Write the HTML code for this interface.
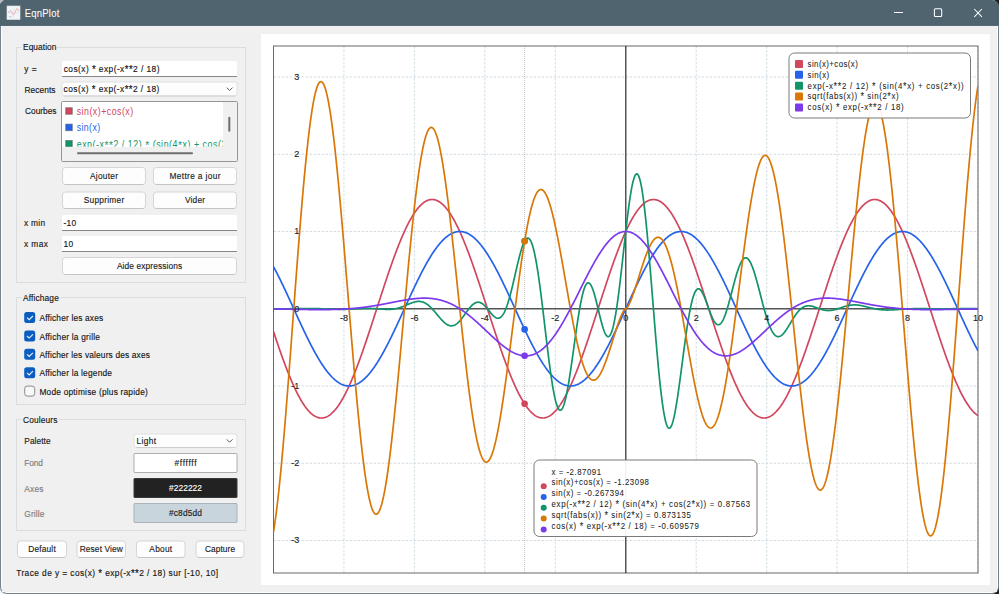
<!DOCTYPE html>
<html><head><meta charset="utf-8"><title>EqnPlot</title>
<style>html,body{margin:0;padding:0;background:#1b1b1b;overflow:hidden}svg{display:block}text{font-family:"Liberation Sans", sans-serif}</style>
</head><body>
<svg width="999" height="594" viewBox="0 0 999 594" style='font-family:"Liberation Sans", sans-serif'>
<rect x="0" y="0" width="999" height="594" fill="#1b1b1b"/>
<rect x="0" y="300" width="300" height="294" fill="#f4f4f4"/>
<rect x="0" y="0" width="20" height="20" fill="#c9cdd0"/>
<rect x="0" y="0" width="999" height="594" rx="7" fill="#72838d"/>
<rect x="1" y="0" width="997" height="593" rx="6" fill="#ffffff"/>
<rect x="2" y="26" width="995" height="566" fill="#f0f0f0"/>
<path d="M0,0 L992,0 A7,7 0 0 1 999,7 L999,26 L0,26 Z" fill="#506470"/>
<path d="M0,0 L4,0 Q2,1.5 0,4 Z" fill="#b8bcc0"/>
<rect x="0" y="25" width="999" height="1" fill="#576a76"/>
<rect x="7" y="6" width="13" height="13.5" fill="#f2f5f7" stroke="#e4e9ec" stroke-width="0.6"/>
<path d="M8.5,13 Q10,9 11.3,11.5 T13.5,15 Q15,13 16,10 T18.8,11" fill="none" stroke="#f0a0a8" stroke-width="0.9"/>
<path d="M13.2,8 L13.2,18 M8,12.8 L19,12.8" fill="none" stroke="#cfd8de" stroke-width="0.5"/>
<path d="M9.5,16 L11,17.5" fill="none" stroke="#808890" stroke-width="0.7"/>
<text transform="translate(24.80,16.80) scale(0.88,1)" x="0" y="0" font-size="10.8" fill="#ffffff" text-anchor="start" font-weight="normal" textLength="39.20" lengthAdjust="spacing" stroke="#ffffff" stroke-width="0.05">EqnPlot</text>
<rect x="894" y="12" width="9" height="1" fill="#ffffff"/>
<rect x="934.4" y="8.8" width="7.3" height="7.7" rx="1" fill="none" stroke="#ffffff" stroke-width="1.05"/>
<path d="M974.3,9 L981.9,16.8 M981.9,9 L974.3,16.8" stroke="#ffffff" stroke-width="1.05"/>
<rect x="16.5" y="47.5" width="229" height="235" rx="0" fill="none" stroke="#dcdcdc" stroke-width="1"/>
<rect x="21.5" y="42" width="35.5" height="10" fill="#f0f0f0"/>
<text transform="translate(23.00,50.00) scale(0.88,1)" x="0" y="0" font-size="9.5" fill="#141414" text-anchor="start" font-weight="normal" textLength="38.07" lengthAdjust="spacing" stroke="#141414" stroke-width="0.15">Equation</text>
<text transform="translate(24.20,72.30) scale(0.88,1)" x="0" y="0" font-size="9.5" fill="#141414" text-anchor="start" font-weight="normal" textLength="14.20" lengthAdjust="spacing" stroke="#141414" stroke-width="0.15">y =</text>
<rect x="62" y="61" width="175" height="16" rx="1.5" fill="#ffffff"/>
<rect x="62" y="76" width="175" height="1" fill="#878787"/>
<text transform="translate(63.70,72.30) scale(0.88,1)" x="0" y="0" font-size="9.5" fill="#141414" text-anchor="start" font-weight="normal" textLength="108.86" lengthAdjust="spacing" stroke="#141414" stroke-width="0.15">cos(x) <tspan font-size="10.92" baseline-shift="-1.3">*</tspan> exp(-x<tspan font-size="10.92" baseline-shift="-1.3">*</tspan><tspan font-size="10.92" baseline-shift="-1.3">*</tspan>2 / 18)</text>
<text transform="translate(24.50,92.60) scale(0.88,1)" x="0" y="0" font-size="9.5" fill="#141414" text-anchor="start" font-weight="normal" textLength="35.23" lengthAdjust="spacing" stroke="#141414" stroke-width="0.15">Recents</text>
<rect x="62.0" y="82.0" width="175.0" height="14.0" rx="2.2" fill="#fdfdfd" stroke="#e0e0e0" stroke-width="1"/>
<path d="M64.0,96.0 L235.0,96.0" stroke="#cfcfcf" stroke-width="1"/>
<path d="M226.8,87.6 L229.6,90.5 L232.5,87.6" fill="none" stroke="#5f5f5f" stroke-width="1"/>
<text transform="translate(63.60,92.40) scale(0.88,1)" x="0" y="0" font-size="9.5" fill="#141414" text-anchor="start" font-weight="normal" textLength="108.86" lengthAdjust="spacing" stroke="#141414" stroke-width="0.15">cos(x) <tspan font-size="10.92" baseline-shift="-1.3">*</tspan> exp(-x<tspan font-size="10.92" baseline-shift="-1.3">*</tspan><tspan font-size="10.92" baseline-shift="-1.3">*</tspan>2 / 18)</text>
<text transform="translate(25.00,114.30) scale(0.88,1)" x="0" y="0" font-size="9.5" fill="#141414" text-anchor="start" font-weight="normal" textLength="35.80" lengthAdjust="spacing" stroke="#141414" stroke-width="0.15">Courbes</text>
<rect x="61.5" y="101.5" width="176" height="60" rx="1" fill="#f0f0f0" stroke="#959595" stroke-width="1"/>
<rect x="62" y="102" width="161" height="45" fill="#ffffff"/>
<defs><clipPath id="lc"><rect x="62" y="102" width="161" height="44.8"/></clipPath></defs>
<g clip-path="url(#lc)">
<rect x="65.7" y="107.69999999999999" width="6.6" height="6.6" fill="#d1475e" stroke="#505050" stroke-opacity="0.55" stroke-width="0.9"/>
<text transform="translate(76.70,114.90) scale(0.88,1)" x="0" y="0" font-size="10" fill="#d1475e" text-anchor="start" font-weight="normal" textLength="64.20" lengthAdjust="spacing">sin(x)+cos(x)</text>
<rect x="65.7" y="124.1" width="6.6" height="6.6" fill="#2563eb" stroke="#505050" stroke-opacity="0.55" stroke-width="0.9"/>
<text transform="translate(76.70,131.30) scale(0.88,1)" x="0" y="0" font-size="10" fill="#2563eb" text-anchor="start" font-weight="normal" textLength="26.70" lengthAdjust="spacing">sin(x)</text>
<rect x="65.7" y="140.49999999999997" width="6.6" height="6.6" fill="#11946a" stroke="#505050" stroke-opacity="0.55" stroke-width="0.9"/>
<text transform="translate(76.70,147.70) scale(0.88,1)" x="0" y="0" font-size="10" fill="#11946a" text-anchor="start" font-weight="normal" textLength="188.64" lengthAdjust="spacing">exp(-x<tspan font-size="11.50" baseline-shift="-1.3">*</tspan><tspan font-size="11.50" baseline-shift="-1.3">*</tspan>2 / 12) <tspan font-size="11.50" baseline-shift="-1.3">*</tspan> (sin(4<tspan font-size="11.50" baseline-shift="-1.3">*</tspan>x) + cos(2<tspan font-size="11.50" baseline-shift="-1.3">*</tspan>x))</text>
</g>
<rect x="228.3" y="116.7" width="2" height="15" rx="1" fill="#6e6e6e"/>
<rect x="77" y="152.2" width="116" height="2" rx="1" fill="#6e6e6e"/>
<rect x="62.5" y="167.5" width="83" height="17" rx="3" fill="#fdfdfd" stroke="#d5d5d5" stroke-width="1"/>
<path d="M64.5,184.5 L143.5,184.5" stroke="#c4c4c4" stroke-width="1"/>
<text transform="translate(89.90,179.20) scale(0.88,1)" x="0" y="0" font-size="9.5" fill="#1a1a1a" text-anchor="start" font-weight="normal" textLength="32.05" lengthAdjust="spacing" stroke="#1a1a1a" stroke-width="0.15">Ajouter</text>
<rect x="153.5" y="167.5" width="83" height="17" rx="3" fill="#fdfdfd" stroke="#d5d5d5" stroke-width="1"/>
<path d="M155.5,184.5 L234.5,184.5" stroke="#c4c4c4" stroke-width="1"/>
<text transform="translate(169.50,179.20) scale(0.88,1)" x="0" y="0" font-size="9.5" fill="#1a1a1a" text-anchor="start" font-weight="normal" textLength="57.95" lengthAdjust="spacing" stroke="#1a1a1a" stroke-width="0.15">Mettre a jour</text>
<rect x="62.5" y="192.0" width="83" height="16.5" rx="3" fill="#fdfdfd" stroke="#d5d5d5" stroke-width="1"/>
<path d="M64.5,208.5 L143.5,208.5" stroke="#c4c4c4" stroke-width="1"/>
<text transform="translate(83.80,203.45) scale(0.88,1)" x="0" y="0" font-size="9.5" fill="#1a1a1a" text-anchor="start" font-weight="normal" textLength="45.91" lengthAdjust="spacing" stroke="#1a1a1a" stroke-width="0.15">Supprimer</text>
<rect x="153.5" y="192.0" width="83" height="16.5" rx="3" fill="#fdfdfd" stroke="#d5d5d5" stroke-width="1"/>
<path d="M155.5,208.5 L234.5,208.5" stroke="#c4c4c4" stroke-width="1"/>
<text transform="translate(185.00,203.45) scale(0.88,1)" x="0" y="0" font-size="9.5" fill="#1a1a1a" text-anchor="start" font-weight="normal" textLength="22.73" lengthAdjust="spacing" stroke="#1a1a1a" stroke-width="0.15">Vider</text>
<text transform="translate(24.00,225.80) scale(0.88,1)" x="0" y="0" font-size="9.5" fill="#141414" text-anchor="start" font-weight="normal" textLength="24.09" lengthAdjust="spacing" stroke="#141414" stroke-width="0.15">x min</text>
<rect x="62" y="215" width="175" height="16" rx="1.5" fill="#ffffff"/>
<rect x="62" y="230" width="175" height="1" fill="#878787"/>
<text transform="translate(63.60,225.80) scale(0.88,1)" x="0" y="0" font-size="9.5" fill="#141414" text-anchor="start" font-weight="normal" textLength="14.20" lengthAdjust="spacing" stroke="#141414" stroke-width="0.15">-10</text>
<text transform="translate(24.00,247.00) scale(0.88,1)" x="0" y="0" font-size="9.5" fill="#141414" text-anchor="start" font-weight="normal" textLength="27.27" lengthAdjust="spacing" stroke="#141414" stroke-width="0.15">x max</text>
<rect x="62" y="236" width="175" height="16" rx="1.5" fill="#ffffff"/>
<rect x="62" y="251" width="175" height="1" fill="#878787"/>
<text transform="translate(63.60,247.00) scale(0.88,1)" x="0" y="0" font-size="9.5" fill="#141414" text-anchor="start" font-weight="normal" textLength="10.80" lengthAdjust="spacing" stroke="#141414" stroke-width="0.15">10</text>
<rect x="62.5" y="257.5" width="174" height="17" rx="3" fill="#fdfdfd" stroke="#d5d5d5" stroke-width="1"/>
<path d="M64.5,274.5 L234.5,274.5" stroke="#c4c4c4" stroke-width="1"/>
<text transform="translate(116.90,269.20) scale(0.88,1)" x="0" y="0" font-size="9.5" fill="#1a1a1a" text-anchor="start" font-weight="normal" textLength="74.09" lengthAdjust="spacing" stroke="#1a1a1a" stroke-width="0.15">Aide expressions</text>
<rect x="16.5" y="297.5" width="229" height="107" rx="0" fill="none" stroke="#dcdcdc" stroke-width="1"/>
<rect x="21.5" y="292" width="38.5" height="10" fill="#f0f0f0"/>
<text transform="translate(23.00,301.00) scale(0.88,1)" x="0" y="0" font-size="9.5" fill="#141414" text-anchor="start" font-weight="normal" textLength="40.68" lengthAdjust="spacing" stroke="#141414" stroke-width="0.15">Affichage</text>
<rect x="24.2" y="312.0" width="11" height="11" rx="2.5" fill="#0b5ebf"/>
<path d="M27.0,317.6 L29.2,319.7 L32.9,316.0" fill="none" stroke="#eef4ff" stroke-width="1.1"/>
<text transform="translate(39.40,321.10) scale(0.88,1)" x="0" y="0" font-size="9.5" fill="#141414" text-anchor="start" font-weight="normal" textLength="72.50" lengthAdjust="spacing" stroke="#141414" stroke-width="0.15">Afficher les axes</text>
<rect x="24.2" y="330.4" width="11" height="11" rx="2.5" fill="#0b5ebf"/>
<path d="M27.0,336.0 L29.2,338.09999999999997 L32.9,334.4" fill="none" stroke="#eef4ff" stroke-width="1.1"/>
<text transform="translate(39.40,339.50) scale(0.88,1)" x="0" y="0" font-size="9.5" fill="#141414" text-anchor="start" font-weight="normal" textLength="68.86" lengthAdjust="spacing" stroke="#141414" stroke-width="0.15">Afficher la grille</text>
<rect x="24.2" y="348.8" width="11" height="11" rx="2.5" fill="#0b5ebf"/>
<path d="M27.0,354.40000000000003 L29.2,356.5 L32.9,352.8" fill="none" stroke="#eef4ff" stroke-width="1.1"/>
<text transform="translate(39.40,357.90) scale(0.88,1)" x="0" y="0" font-size="9.5" fill="#141414" text-anchor="start" font-weight="normal" textLength="125.57" lengthAdjust="spacing" stroke="#141414" stroke-width="0.15">Afficher les valeurs des axes</text>
<rect x="24.2" y="367.2" width="11" height="11" rx="2.5" fill="#0b5ebf"/>
<path d="M27.0,372.8 L29.2,374.9 L32.9,371.2" fill="none" stroke="#eef4ff" stroke-width="1.1"/>
<text transform="translate(39.40,376.30) scale(0.88,1)" x="0" y="0" font-size="9.5" fill="#141414" text-anchor="start" font-weight="normal" textLength="82.50" lengthAdjust="spacing" stroke="#141414" stroke-width="0.15">Afficher la legende</text>
<rect x="24.7" y="386.1" width="10" height="10" rx="2.5" fill="#f8f8f8" stroke="#8a8a8a" stroke-width="1"/>
<text transform="translate(39.40,394.70) scale(0.88,1)" x="0" y="0" font-size="9.5" fill="#141414" text-anchor="start" font-weight="normal" textLength="123.18" lengthAdjust="spacing" stroke="#141414" stroke-width="0.15">Mode optimise (plus rapide)</text>
<rect x="16.5" y="419.5" width="229" height="111" rx="0" fill="none" stroke="#dcdcdc" stroke-width="1"/>
<rect x="21.5" y="414" width="37.5" height="10" fill="#f0f0f0"/>
<text transform="translate(23.00,423.30) scale(0.88,1)" x="0" y="0" font-size="9.5" fill="#141414" text-anchor="start" font-weight="normal" textLength="39.09" lengthAdjust="spacing" stroke="#141414" stroke-width="0.15">Couleurs</text>
<text transform="translate(24.30,443.70) scale(0.88,1)" x="0" y="0" font-size="9.5" fill="#1a1a1a" text-anchor="start" font-weight="normal" textLength="29.89" lengthAdjust="spacing" stroke="#1a1a1a" stroke-width="0.15">Palette</text>
<rect x="134.0" y="434.0" width="103.0" height="13.5" rx="2.2" fill="#fdfdfd" stroke="#e0e0e0" stroke-width="1"/>
<path d="M136.0,447.5 L235.0,447.5" stroke="#cfcfcf" stroke-width="1"/>
<path d="M226.8,439.35 L229.6,442.25 L232.5,439.35" fill="none" stroke="#5f5f5f" stroke-width="1"/>
<text transform="translate(136.50,444.15) scale(0.88,1)" x="0" y="0" font-size="9.5" fill="#141414" text-anchor="start" font-weight="normal" textLength="22.16" lengthAdjust="spacing" stroke="#141414" stroke-width="0.15">Light</text>
<text transform="translate(24.30,466.40) scale(0.88,1)" x="0" y="0" font-size="9.5" fill="#7c7c7c" text-anchor="start" font-weight="normal" textLength="21.25" lengthAdjust="spacing" stroke="#7c7c7c" stroke-width="0.15">Fond</text>
<text transform="translate(24.30,491.70) scale(0.88,1)" x="0" y="0" font-size="9.5" fill="#7c7c7c" text-anchor="start" font-weight="normal" textLength="21.82" lengthAdjust="spacing" stroke="#7c7c7c" stroke-width="0.15">Axes</text>
<text transform="translate(24.30,516.70) scale(0.88,1)" x="0" y="0" font-size="9.5" fill="#7c7c7c" text-anchor="start" font-weight="normal" textLength="22.95" lengthAdjust="spacing" stroke="#7c7c7c" stroke-width="0.15">Grille</text>
<rect x="134.0" y="453.5" width="103.0" height="19" rx="0.5" fill="#ffffff" stroke="#adadad" stroke-width="1"/>
<text transform="translate(174.50,466.20) scale(0.88,1)" x="0" y="0" font-size="9.5" fill="#1a1a1a" text-anchor="start" font-weight="normal" textLength="25.00" lengthAdjust="spacing" stroke="#1a1a1a" stroke-width="0.15">#ffffff</text>
<rect x="134.0" y="478.5" width="103.0" height="19" rx="0.5" fill="#222222" stroke="#3a3a3a" stroke-width="1"/>
<text transform="translate(169.00,491.20) scale(0.88,1)" x="0" y="0" font-size="9.5" fill="#ffffff" text-anchor="start" font-weight="normal" textLength="37.50" lengthAdjust="spacing" stroke="#ffffff" stroke-width="0.15">#222222</text>
<rect x="134.0" y="503.5" width="103.0" height="19" rx="0.5" fill="#c8d5dd" stroke="#a9b2b8" stroke-width="1"/>
<text transform="translate(169.00,516.20) scale(0.88,1)" x="0" y="0" font-size="9.5" fill="#1a1a1a" text-anchor="start" font-weight="normal" textLength="37.50" lengthAdjust="spacing" stroke="#1a1a1a" stroke-width="0.15">#c8d5dd</text>
<rect x="17.5" y="541.0" width="49" height="16.5" rx="3" fill="#fdfdfd" stroke="#d5d5d5" stroke-width="1"/>
<path d="M19.5,557.5 L64.5,557.5" stroke="#c4c4c4" stroke-width="1"/>
<text transform="translate(28.30,552.45) scale(0.88,1)" x="0" y="0" font-size="9.5" fill="#1a1a1a" text-anchor="start" font-weight="normal" textLength="31.14" lengthAdjust="spacing" stroke="#1a1a1a" stroke-width="0.15">Default</text>
<rect x="77.0" y="541.0" width="48.5" height="16.5" rx="3" fill="#fdfdfd" stroke="#d5d5d5" stroke-width="1"/>
<path d="M79.0,557.5 L123.5,557.5" stroke="#c4c4c4" stroke-width="1"/>
<text transform="translate(79.65,552.45) scale(0.88,1)" x="0" y="0" font-size="9.5" fill="#1a1a1a" text-anchor="start" font-weight="normal" textLength="49.09" lengthAdjust="spacing" stroke="#1a1a1a" stroke-width="0.15">Reset View</text>
<rect x="136.5" y="541.0" width="48.5" height="16.5" rx="3" fill="#fdfdfd" stroke="#d5d5d5" stroke-width="1"/>
<path d="M138.5,557.5 L183.0,557.5" stroke="#c4c4c4" stroke-width="1"/>
<text transform="translate(149.35,552.45) scale(0.88,1)" x="0" y="0" font-size="9.5" fill="#1a1a1a" text-anchor="start" font-weight="normal" textLength="25.91" lengthAdjust="spacing" stroke="#1a1a1a" stroke-width="0.15">About</text>
<rect x="196.0" y="541.0" width="48.0" height="16.5" rx="3" fill="#fdfdfd" stroke="#d5d5d5" stroke-width="1"/>
<path d="M198.0,557.5 L242.0,557.5" stroke="#c4c4c4" stroke-width="1"/>
<text transform="translate(204.95,552.45) scale(0.88,1)" x="0" y="0" font-size="9.5" fill="#1a1a1a" text-anchor="start" font-weight="normal" textLength="34.20" lengthAdjust="spacing" stroke="#1a1a1a" stroke-width="0.15">Capture</text>
<text transform="translate(16.20,575.60) scale(0.88,1)" x="0" y="0" font-size="9.5" fill="#141414" text-anchor="start" font-weight="normal" textLength="229.55" lengthAdjust="spacing" stroke="#141414" stroke-width="0.15">Trace de y = cos(x) <tspan font-size="10.92" baseline-shift="-1.3">*</tspan> exp(-x<tspan font-size="10.92" baseline-shift="-1.3">*</tspan><tspan font-size="10.92" baseline-shift="-1.3">*</tspan>2 / 18) sur [-10, 10]</text>
<rect x="261" y="34" width="729" height="551" fill="#ffffff"/>
<defs><clipPath id="pc"><rect x="273.5" y="46" width="704.5" height="527"/></clipPath></defs>
<path d="M343.95,46.0 L343.95,573.0 M414.40,46.0 L414.40,573.0 M484.85,46.0 L484.85,573.0 M555.30,46.0 L555.30,573.0 M625.75,46.0 L625.75,573.0 M696.20,46.0 L696.20,573.0 M766.65,46.0 L766.65,573.0 M837.10,46.0 L837.10,573.0 M907.55,46.0 L907.55,573.0 M978.00,46.0 L978.00,573.0 M273.5,540.50 L978.0,540.50 M273.5,463.25 L978.0,463.25 M273.5,386.00 L978.0,386.00 M273.5,308.75 L978.0,308.75 M273.5,231.50 L978.0,231.50 M273.5,154.25 L978.0,154.25 M273.5,77.00 L978.0,77.00" stroke="#c8d5dd" stroke-opacity="0.8" stroke-width="1" stroke-dasharray="2.5 1.5" fill="none"/>
<path d="M524.62,46.0 L524.62,573.0" stroke="#8a8a8a" stroke-opacity="0.5" stroke-width="1" stroke-dasharray="1 1"/>
<path d="M273.5,308.75 L978.0,308.75 M625.75,46.0 L625.75,573.0" stroke="#222222" stroke-width="1.5" stroke-opacity="0.75"/>
<rect x="273.5" y="46.0" width="704.5" height="527.0" fill="none" stroke="#222222" stroke-opacity="0.68" stroke-width="1"/>
<g clip-path="url(#pc)" fill="none" stroke-width="1.7" stroke-linejoin="round">
<polyline points="273.50,331.54 274.00,333.07 274.51,334.59 275.01,336.10 275.51,337.61 276.02,339.12 276.52,340.61 277.03,342.10 277.53,343.59 278.03,345.06 278.54,346.53 279.04,347.99 279.54,349.45 280.05,350.89 280.55,352.33 281.05,353.76 281.56,355.18 282.06,356.58 282.56,357.98 283.07,359.37 283.57,360.75 284.08,362.12 284.58,363.48 285.08,364.82 285.59,366.16 286.09,367.48 286.59,368.79 287.10,370.09 287.60,371.38 288.10,372.65 288.61,373.91 289.11,375.16 289.61,376.39 290.12,377.61 290.62,378.81 291.13,380.01 291.63,381.18 292.13,382.34 292.64,383.49 293.14,384.62 293.64,385.74 294.15,386.84 294.65,387.92 295.15,388.99 295.66,390.04 296.16,391.08 296.66,392.10 297.17,393.10 297.67,394.08 298.18,395.05 298.68,396.00 299.18,396.93 299.69,397.84 300.19,398.73 300.69,399.61 301.20,400.47 301.70,401.31 302.20,402.13 302.71,402.93 303.21,403.71 303.71,404.47 304.22,405.22 304.72,405.94 305.23,406.64 305.73,407.33 306.23,407.99 306.74,408.63 307.24,409.25 307.74,409.86 308.25,410.44 308.75,411.00 309.25,411.54 309.76,412.06 310.26,412.55 310.76,413.03 311.27,413.49 311.77,413.92 312.28,414.33 312.78,414.72 313.28,415.09 313.79,415.44 314.29,415.76 314.79,416.07 315.30,416.35 315.80,416.61 316.30,416.84 316.81,417.06 317.31,417.25 317.81,417.42 318.32,417.57 318.82,417.70 319.33,417.80 319.83,417.89 320.33,417.95 320.84,417.98 321.34,418.00 321.84,417.99 322.35,417.96 322.85,417.91 323.35,417.83 323.86,417.74 324.36,417.62 324.86,417.48 325.37,417.32 325.87,417.13 326.38,416.92 326.88,416.69 327.38,416.44 327.89,416.17 328.39,415.87 328.89,415.55 329.40,415.21 329.90,414.85 330.40,414.47 330.91,414.07 331.41,413.64 331.91,413.19 332.42,412.72 332.92,412.23 333.43,411.72 333.93,411.19 334.43,410.64 334.94,410.06 335.44,409.47 335.94,408.85 336.45,408.22 336.95,407.56 337.45,406.89 337.96,406.19 338.46,405.47 338.96,404.74 339.47,403.98 339.97,403.21 340.48,402.41 340.98,401.60 341.48,400.77 341.99,399.91 342.49,399.04 342.99,398.16 343.50,397.25 344.00,396.32 344.50,395.38 345.01,394.42 345.51,393.44 346.01,392.45 346.52,391.44 347.02,390.41 347.53,389.36 348.03,388.30 348.53,387.22 349.04,386.13 349.54,385.02 350.04,383.89 350.55,382.75 351.05,381.59 351.55,380.42 352.06,379.23 352.56,378.03 353.06,376.82 353.57,375.59 354.07,374.35 354.58,373.09 355.08,371.82 355.58,370.54 356.09,369.25 356.59,367.94 357.09,366.62 357.60,365.29 358.10,363.95 358.60,362.60 359.11,361.23 359.61,359.86 360.11,358.47 360.62,357.08 361.12,355.67 361.63,354.26 362.13,352.83 362.63,351.40 363.14,349.96 363.64,348.50 364.14,347.05 364.65,345.58 365.15,344.11 365.65,342.62 366.16,341.14 366.66,339.64 367.16,338.14 367.67,336.63 368.17,335.12 368.68,333.60 369.18,332.08 369.68,330.55 370.19,329.02 370.69,327.48 371.19,325.94 371.70,324.40 372.20,322.85 372.70,321.30 373.21,319.75 373.71,318.19 374.21,316.63 374.72,315.08 375.22,313.52 375.73,311.96 376.23,310.39 376.73,308.83 377.24,307.27 377.74,305.71 378.24,304.15 378.75,302.59 379.25,301.03 379.75,299.47 380.26,297.92 380.76,296.36 381.26,294.81 381.77,293.27 382.27,291.72 382.78,290.18 383.28,288.64 383.78,287.11 384.29,285.58 384.79,284.06 385.29,282.54 385.80,281.03 386.30,279.52 386.80,278.02 387.31,276.52 387.81,275.03 388.31,273.55 388.82,272.08 389.32,270.61 389.83,269.15 390.33,267.70 390.83,266.25 391.34,264.82 391.84,263.39 392.34,261.98 392.85,260.57 393.35,259.17 393.85,257.79 394.36,256.41 394.86,255.05 395.36,253.69 395.87,252.35 396.37,251.02 396.88,249.70 397.38,248.39 397.88,247.09 398.39,245.81 398.89,244.54 399.39,243.28 399.90,242.04 400.40,240.81 400.90,239.59 401.41,238.39 401.91,237.20 402.41,236.03 402.92,234.87 403.42,233.73 403.93,232.60 404.43,231.49 404.93,230.39 405.44,229.31 405.94,228.25 406.44,227.20 406.95,226.17 407.45,225.16 407.95,224.16 408.46,223.18 408.96,222.22 409.46,221.27 409.97,220.35 410.47,219.44 410.98,218.55 411.48,217.68 411.98,216.82 412.49,215.99 412.99,215.17 413.49,214.38 414.00,213.60 414.50,212.84 415.00,212.10 415.51,211.39 416.01,210.69 416.52,210.01 417.02,209.35 417.52,208.71 418.03,208.10 418.53,207.50 419.03,206.92 419.54,206.37 420.04,205.83 420.54,205.32 421.05,204.83 421.55,204.36 422.05,203.91 422.56,203.48 423.06,203.07 423.57,202.69 424.07,202.32 424.57,201.98 425.08,201.66 425.58,201.36 426.08,201.09 426.59,200.83 427.09,200.60 427.59,200.39 428.10,200.20 428.60,200.04 429.10,199.89 429.61,199.77 430.11,199.67 430.62,199.60 431.12,199.54 431.62,199.51 432.13,199.50 432.63,199.51 433.13,199.55 433.64,199.61 434.14,199.69 434.64,199.79 435.15,199.91 435.65,200.06 436.15,200.23 436.66,200.42 437.16,200.63 437.67,200.87 438.17,201.12 438.67,201.40 439.18,201.70 439.68,202.03 440.18,202.37 440.69,202.74 441.19,203.13 441.69,203.54 442.20,203.97 442.70,204.42 443.20,204.89 443.71,205.39 444.21,205.91 444.72,206.44 445.22,207.00 445.72,207.58 446.23,208.18 446.73,208.80 447.23,209.44 447.74,210.10 448.24,210.78 448.74,211.49 449.25,212.21 449.75,212.95 450.25,213.71 450.76,214.49 451.26,215.29 451.77,216.10 452.27,216.94 452.77,217.80 453.28,218.67 453.78,219.57 454.28,220.48 454.79,221.41 455.29,222.35 455.79,223.32 456.30,224.30 456.80,225.30 457.30,226.31 457.81,227.35 458.31,228.40 458.82,229.46 459.32,230.55 459.82,231.65 460.33,232.76 460.83,233.89 461.33,235.03 461.84,236.19 462.34,237.37 462.84,238.56 463.35,239.76 463.85,240.98 464.35,242.21 464.86,243.46 465.36,244.72 465.87,245.99 466.37,247.27 466.87,248.57 467.38,249.88 467.88,251.20 468.38,252.54 468.89,253.88 469.39,255.24 469.89,256.60 470.40,257.98 470.90,259.37 471.40,260.77 471.91,262.18 472.41,263.59 472.92,265.02 473.42,266.46 473.92,267.90 474.43,269.35 474.93,270.81 475.43,272.28 475.94,273.76 476.44,275.24 476.94,276.73 477.45,278.23 477.95,279.73 478.45,281.24 478.96,282.75 479.46,284.27 479.97,285.80 480.47,287.33 480.97,288.86 481.48,290.40 481.98,291.94 482.48,293.48 482.99,295.03 483.49,296.58 483.99,298.14 484.50,299.69 485.00,301.25 485.50,302.81 486.01,304.37 486.51,305.93 487.02,307.49 487.52,309.05 488.02,310.61 488.53,312.17 489.03,313.74 489.53,315.29 490.04,316.85 490.54,318.41 491.04,319.96 491.55,321.52 492.05,323.07 492.55,324.61 493.06,326.16 493.56,327.70 494.07,329.23 494.57,330.76 495.07,332.29 495.58,333.81 496.08,335.33 496.58,336.84 497.09,338.35 497.59,339.85 498.09,341.35 498.60,342.83 499.10,344.31 499.60,345.79 500.11,347.25 500.61,348.71 501.12,350.16 501.62,351.60 502.12,353.03 502.63,354.45 503.13,355.87 503.63,357.27 504.14,358.67 504.64,360.05 505.14,361.42 505.65,362.79 506.15,364.14 506.65,365.48 507.16,366.81 507.66,368.13 508.17,369.43 508.67,370.72 509.17,372.00 509.68,373.27 510.18,374.52 510.68,375.76 511.19,376.99 511.69,378.20 512.19,379.40 512.70,380.59 513.20,381.75 513.70,382.91 514.21,384.05 514.71,385.17 515.22,386.28 515.72,387.37 516.22,388.45 516.73,389.51 517.23,390.55 517.73,391.58 518.24,392.59 518.74,393.58 519.24,394.56 519.75,395.52 520.25,396.46 520.75,397.38 521.26,398.28 521.76,399.17 522.27,400.03 522.77,400.88 523.27,401.71 523.78,402.52 524.28,403.32 524.78,404.09 525.29,404.84 525.79,405.57 526.29,406.29 526.80,406.98 527.30,407.65 527.80,408.31 528.31,408.94 528.81,409.55 529.32,410.14 529.82,410.72 530.32,411.27 530.83,411.80 531.33,412.30 531.83,412.79 532.34,413.26 532.84,413.70 533.34,414.12 533.85,414.53 534.35,414.91 534.85,415.26 535.36,415.60 535.86,415.91 536.37,416.21 536.87,416.48 537.37,416.73 537.88,416.95 538.38,417.16 538.88,417.34 539.39,417.50 539.89,417.64 540.39,417.75 540.90,417.85 541.40,417.92 541.90,417.97 542.41,417.99 542.91,418.00 543.42,417.98 543.92,417.94 544.42,417.88 544.93,417.79 545.43,417.68 545.93,417.55 546.44,417.40 546.94,417.23 547.44,417.03 547.95,416.81 548.45,416.57 548.95,416.31 549.46,416.02 549.96,415.72 550.47,415.39 550.97,415.04 551.47,414.67 551.98,414.27 552.48,413.86 552.98,413.42 553.49,412.96 553.99,412.49 554.49,411.99 555.00,411.46 555.50,410.92 556.01,410.36 556.51,409.77 557.01,409.17 557.52,408.54 558.02,407.90 558.52,407.23 559.03,406.55 559.53,405.84 560.03,405.11 560.54,404.37 561.04,403.60 561.54,402.82 562.05,402.01 562.55,401.19 563.06,400.35 563.56,399.49 564.06,398.61 564.57,397.71 565.07,396.80 565.57,395.86 566.08,394.91 566.58,393.94 567.08,392.96 567.59,391.95 568.09,390.93 568.59,389.90 569.10,388.84 569.60,387.77 570.11,386.68 570.61,385.58 571.11,384.46 571.62,383.33 572.12,382.18 572.62,381.02 573.13,379.84 573.63,378.65 574.13,377.44 574.64,376.22 575.14,374.98 575.64,373.73 576.15,372.47 576.65,371.20 577.16,369.91 577.66,368.61 578.16,367.30 578.67,365.97 579.17,364.63 579.67,363.29 580.18,361.93 580.68,360.56 581.18,359.18 581.69,357.79 582.19,356.39 582.69,354.98 583.20,353.56 583.70,352.13 584.21,350.69 584.71,349.24 585.21,347.79 585.72,346.33 586.22,344.86 586.72,343.38 587.23,341.89 587.73,340.40 588.23,338.90 588.74,337.40 589.24,335.89 589.74,334.37 590.25,332.85 590.75,331.33 591.26,329.80 591.76,328.26 592.26,326.72 592.77,325.18 593.27,323.64 593.77,322.09 594.28,320.54 594.78,318.98 595.28,317.43 595.79,315.87 596.29,314.31 596.79,312.75 597.30,311.19 597.80,309.63 598.31,308.06 598.81,306.50 599.31,304.94 599.82,303.38 600.32,301.82 600.82,300.26 601.33,298.71 601.83,297.15 602.33,295.60 602.84,294.05 603.34,292.51 603.84,290.96 604.35,289.43 604.85,287.89 605.36,286.36 605.86,284.83 606.36,283.31 606.87,281.80 607.37,280.28 607.87,278.78 608.38,277.28 608.88,275.79 609.38,274.30 609.89,272.82 610.39,271.35 610.89,269.89 611.40,268.43 611.90,266.99 612.41,265.55 612.91,264.12 613.41,262.70 613.92,261.29 614.42,259.88 614.92,258.49 615.43,257.11 615.93,255.74 616.43,254.38 616.94,253.03 617.44,251.69 617.94,250.37 618.45,249.05 618.95,247.75 619.46,246.46 619.96,245.18 620.46,243.92 620.97,242.67 621.47,241.43 621.97,240.21 622.48,239.00 622.98,237.81 623.48,236.63 623.99,235.46 624.49,234.31 624.99,233.17 625.50,232.05 626.00,230.95 626.51,229.86 627.01,228.79 627.51,227.73 628.02,226.69 628.52,225.67 629.02,224.67 629.53,223.68 630.03,222.71 630.53,221.75 631.04,220.82 631.54,219.90 632.04,219.00 632.55,218.12 633.05,217.25 633.56,216.41 634.06,215.59 634.56,214.78 635.07,213.99 635.57,213.23 636.07,212.48 636.58,211.75 637.08,211.04 637.58,210.35 638.09,209.68 638.59,209.03 639.09,208.41 639.60,207.80 640.10,207.21 640.61,206.65 641.11,206.10 641.61,205.58 642.12,205.07 642.62,204.59 643.12,204.13 643.63,203.69 644.13,203.28 644.63,202.88 645.14,202.50 645.64,202.15 646.14,201.82 646.65,201.51 647.15,201.22 647.66,200.96 648.16,200.72 648.66,200.50 649.17,200.30 649.67,200.12 650.17,199.96 650.68,199.83 651.18,199.72 651.68,199.63 652.19,199.57 652.69,199.53 653.19,199.50 653.70,199.51 654.20,199.53 654.71,199.58 655.21,199.64 655.71,199.73 656.22,199.85 656.72,199.98 657.22,200.14 657.73,200.32 658.23,200.52 658.73,200.74 659.24,200.99 659.74,201.26 660.24,201.55 660.75,201.86 661.25,202.19 661.76,202.55 662.26,202.93 662.76,203.33 663.27,203.75 663.77,204.19 664.27,204.65 664.78,205.14 665.28,205.64 665.78,206.17 666.29,206.72 666.79,207.28 667.29,207.87 667.80,208.48 668.30,209.11 668.81,209.76 669.31,210.44 669.81,211.13 670.32,211.84 670.82,212.57 671.32,213.32 671.83,214.09 672.33,214.88 672.83,215.69 673.34,216.51 673.84,217.36 674.34,218.22 674.85,219.11 675.35,220.01 675.86,220.93 676.36,221.87 676.86,222.82 677.37,223.80 677.87,224.79 678.37,225.80 678.88,226.82 679.38,227.86 679.88,228.92 680.39,229.99 680.89,231.08 681.39,232.19 681.90,233.31 682.40,234.45 682.91,235.60 683.41,236.77 683.91,237.95 684.42,239.15 684.92,240.36 685.42,241.58 685.93,242.82 686.43,244.08 686.93,245.34 687.44,246.62 687.94,247.91 688.44,249.21 688.95,250.53 689.45,251.86 689.96,253.20 690.46,254.55 690.96,255.91 691.47,257.28 691.97,258.66 692.47,260.06 692.98,261.46 693.48,262.87 693.98,264.29 694.49,265.72 694.99,267.16 695.49,268.61 696.00,270.07 696.50,271.53 697.01,273.01 697.51,274.49 698.01,275.97 698.52,277.46 699.02,278.96 699.52,280.47 700.03,281.98 700.53,283.50 701.03,285.02 701.54,286.55 702.04,288.08 702.55,289.61 703.05,291.15 703.55,292.70 704.06,294.24 704.56,295.79 705.06,297.34 705.57,298.90 706.07,300.46 706.57,302.01 707.08,303.57 707.58,305.13 708.08,306.70 708.59,308.26 709.09,309.82 709.60,311.38 710.10,312.94 710.60,314.50 711.11,316.06 711.61,317.62 712.11,319.17 712.62,320.73 713.12,322.28 713.62,323.83 714.13,325.37 714.63,326.91 715.13,328.45 715.64,329.99 716.14,331.52 716.65,333.04 717.15,334.56 717.65,336.08 718.16,337.59 718.66,339.09 719.16,340.59 719.67,342.08 720.17,343.56 720.67,345.04 721.18,346.51 721.68,347.97 722.18,349.42 722.69,350.87 723.19,352.30 723.70,353.73 724.20,355.15 724.70,356.56 725.21,357.96 725.71,359.35 726.21,360.73 726.72,362.10 727.22,363.45 727.72,364.80 728.23,366.13 728.73,367.46 729.23,368.77 729.74,370.07 730.24,371.35 730.75,372.63 731.25,373.89 731.75,375.13 732.26,376.37 732.76,377.59 733.26,378.79 733.77,379.98 734.27,381.16 734.77,382.32 735.28,383.47 735.78,384.60 736.28,385.72 736.79,386.82 737.29,387.90 737.80,388.97 738.30,390.02 738.80,391.06 739.31,392.08 739.81,393.08 740.31,394.06 740.82,395.03 741.32,395.98 741.82,396.91 742.33,397.82 742.83,398.72 743.33,399.60 743.84,400.45 744.34,401.29 744.85,402.11 745.35,402.92 745.85,403.70 746.36,404.46 746.86,405.20 747.36,405.93 747.87,406.63 748.37,407.31 748.87,407.98 749.38,408.62 749.88,409.24 750.38,409.85 750.89,410.43 751.39,410.99 751.90,411.53 752.40,412.05 752.90,412.55 753.41,413.02 753.91,413.48 754.41,413.91 754.92,414.32 755.42,414.71 755.92,415.08 756.43,415.43 756.93,415.76 757.43,416.06 757.94,416.34 758.44,416.60 758.95,416.84 759.45,417.06 759.95,417.25 760.46,417.42 760.96,417.57 761.46,417.70 761.97,417.80 762.47,417.88 762.97,417.94 763.48,417.98 763.98,418.00 764.48,417.99 764.99,417.96 765.49,417.91 766.00,417.84 766.50,417.74 767.00,417.62 767.51,417.48 768.01,417.32 768.51,417.13 769.02,416.93 769.52,416.70 770.02,416.45 770.53,416.17 771.03,415.88 771.53,415.56 772.04,415.22 772.54,414.86 773.05,414.48 773.55,414.07 774.05,413.65 774.56,413.20 775.06,412.73 775.56,412.24 776.07,411.73 776.57,411.20 777.07,410.65 777.58,410.07 778.08,409.48 778.58,408.86 779.09,408.23 779.59,407.57 780.10,406.90 780.60,406.20 781.10,405.49 781.61,404.75 782.11,403.99 782.61,403.22 783.12,402.43 783.62,401.61 784.12,400.78 784.63,399.93 785.13,399.06 785.63,398.17 786.14,397.27 786.64,396.34 787.15,395.40 787.65,394.44 788.15,393.46 788.66,392.47 789.16,391.45 789.66,390.43 790.17,389.38 790.67,388.32 791.17,387.24 791.68,386.15 792.18,385.04 792.68,383.91 793.19,382.77 793.69,381.61 794.20,380.44 794.70,379.26 795.20,378.05 795.71,376.84 796.21,375.61 796.71,374.37 797.22,373.12 797.72,371.85 798.22,370.57 798.73,369.27 799.23,367.96 799.73,366.65 800.24,365.32 800.74,363.97 801.25,362.62 801.75,361.26 802.25,359.88 802.76,358.50 803.26,357.10 803.76,355.70 804.27,354.28 804.77,352.86 805.27,351.42 805.78,349.98 806.28,348.53 806.78,347.07 807.29,345.61 807.79,344.13 808.30,342.65 808.80,341.16 809.30,339.67 809.81,338.17 810.31,336.66 810.81,335.15 811.32,333.63 811.82,332.11 812.32,330.58 812.83,329.04 813.33,327.51 813.83,325.97 814.34,324.42 814.84,322.88 815.35,321.33 815.85,319.77 816.35,318.22 816.86,316.66 817.36,315.10 817.86,313.54 818.37,311.98 818.87,310.42 819.37,308.86 819.88,307.30 820.38,305.74 820.88,304.18 821.39,302.62 821.89,301.06 822.40,299.50 822.90,297.94 823.40,296.39 823.91,294.84 824.41,293.29 824.91,291.75 825.42,290.21 825.92,288.67 826.42,287.14 826.93,285.61 827.43,284.09 827.93,282.57 828.44,281.05 828.94,279.54 829.45,278.04 829.95,276.55 830.45,275.06 830.96,273.58 831.46,272.10 831.96,270.63 832.47,269.17 832.97,267.72 833.47,266.28 833.98,264.84 834.48,263.42 834.98,262.00 835.49,260.60 835.99,259.20 836.50,257.81 837.00,256.44 837.50,255.07 838.01,253.72 838.51,252.37 839.01,251.04 839.52,249.72 840.02,248.41 840.52,247.12 841.03,245.83 841.53,244.56 842.04,243.31 842.54,242.06 843.04,240.83 843.55,239.61 844.05,238.41 844.55,237.22 845.06,236.05 845.56,234.89 846.06,233.75 846.57,232.62 847.07,231.51 847.57,230.41 848.08,229.33 848.58,228.27 849.09,227.22 849.59,226.19 850.09,225.17 850.60,224.18 851.10,223.20 851.60,222.24 852.11,221.29 852.61,220.36 853.11,219.45 853.62,218.56 854.12,217.69 854.62,216.84 855.13,216.00 855.63,215.19 856.14,214.39 856.64,213.61 857.14,212.86 857.65,212.12 858.15,211.40 858.65,210.70 859.16,210.02 859.66,209.36 860.16,208.72 860.67,208.11 861.17,207.51 861.67,206.93 862.18,206.38 862.68,205.84 863.19,205.33 863.69,204.84 864.19,204.36 864.70,203.91 865.20,203.49 865.70,203.08 866.21,202.69 866.71,202.33 867.21,201.99 867.72,201.67 868.22,201.37 868.72,201.09 869.23,200.84 869.73,200.60 870.24,200.39 870.74,200.21 871.24,200.04 871.75,199.90 872.25,199.78 872.75,199.68 873.26,199.60 873.76,199.54 874.26,199.51 874.77,199.50 875.27,199.51 875.77,199.55 876.28,199.61 876.78,199.69 877.29,199.79 877.79,199.91 878.29,200.06 878.80,200.23 879.30,200.42 879.80,200.63 880.31,200.86 880.81,201.12 881.31,201.40 881.82,201.70 882.32,202.02 882.82,202.37 883.33,202.73 883.83,203.12 884.34,203.53 884.84,203.96 885.34,204.41 885.85,204.89 886.35,205.38 886.85,205.90 887.36,206.43 887.86,206.99 888.36,207.57 888.87,208.17 889.37,208.79 889.87,209.43 890.38,210.09 890.88,210.77 891.39,211.47 891.89,212.19 892.39,212.93 892.90,213.69 893.40,214.47 893.90,215.27 894.41,216.09 894.91,216.93 895.41,217.78 895.92,218.66 896.42,219.55 896.92,220.46 897.43,221.39 897.93,222.34 898.44,223.30 898.94,224.28 899.44,225.28 899.95,226.30 900.45,227.33 900.95,228.38 901.46,229.45 901.96,230.53 902.46,231.63 902.97,232.74 903.47,233.87 903.97,235.01 904.48,236.17 904.98,237.35 905.49,238.54 905.99,239.74 906.49,240.96 907.00,242.19 907.50,243.44 908.00,244.70 908.51,245.97 909.01,247.25 909.51,248.55 910.02,249.86 910.52,251.18 911.02,252.51 911.53,253.86 912.03,255.21 912.54,256.58 913.04,257.96 913.54,259.35 914.05,260.74 914.55,262.15 915.05,263.57 915.56,264.99 916.06,266.43 916.56,267.87 917.07,269.33 917.57,270.79 918.07,272.26 918.58,273.73 919.08,275.21 919.59,276.70 920.09,278.20 920.59,279.70 921.10,281.21 921.60,282.73 922.10,284.25 922.61,285.77 923.11,287.30 923.61,288.83 924.12,290.37 924.62,291.91 925.12,293.46 925.63,295.00 926.13,296.55 926.64,298.11 927.14,299.66 927.64,301.22 928.15,302.78 928.65,304.34 929.15,305.90 929.66,307.46 930.16,309.02 930.66,310.59 931.17,312.15 931.67,313.71 932.17,315.27 932.68,316.83 933.18,318.38 933.69,319.94 934.19,321.49 934.69,323.04 935.20,324.59 935.70,326.13 936.20,327.67 936.71,329.21 937.21,330.74 937.71,332.27 938.22,333.79 938.72,335.31 939.22,336.82 939.73,338.32 940.23,339.82 940.74,341.32 941.24,342.81 941.74,344.29 942.25,345.76 942.75,347.23 943.25,348.68 943.76,350.13 944.26,351.57 944.76,353.01 945.27,354.43 945.77,355.84 946.27,357.25 946.78,358.64 947.28,360.03 947.79,361.40 948.29,362.76 948.79,364.12 949.30,365.46 949.80,366.79 950.30,368.10 950.81,369.41 951.31,370.70 951.81,371.98 952.32,373.25 952.82,374.50 953.32,375.74 953.83,376.97 954.33,378.18 954.84,379.38 955.34,380.56 955.84,381.73 956.35,382.89 956.85,384.03 957.35,385.15 957.86,386.26 958.36,387.35 958.86,388.43 959.37,389.49 959.87,390.53 960.37,391.56 960.88,392.57 961.38,393.56 961.89,394.54 962.39,395.50 962.89,396.44 963.40,397.36 963.90,398.27 964.40,399.15 964.91,400.02 965.41,400.87 965.91,401.70 966.42,402.51 966.92,403.30 967.42,404.07 967.93,404.83 968.43,405.56 968.94,406.28 969.44,406.97 969.94,407.64 970.45,408.30 970.95,408.93 971.45,409.54 971.96,410.13 972.46,410.71 972.96,411.26 973.47,411.79 973.97,412.29 974.47,412.78 974.98,413.25 975.48,413.69 975.99,414.12 976.49,414.52 976.99,414.90 977.50,415.26 978.00,415.59" stroke="#d1475e"/>
<polyline points="273.50,266.72 274.00,267.66 274.51,268.59 275.01,269.54 275.51,270.50 276.02,271.46 276.52,272.43 277.03,273.41 277.53,274.40 278.03,275.39 278.54,276.39 279.04,277.39 279.54,278.41 280.05,279.43 280.55,280.45 281.05,281.48 281.56,282.52 282.06,283.56 282.56,284.60 283.07,285.66 283.57,286.71 284.08,287.77 284.58,288.84 285.08,289.91 285.59,290.98 286.09,292.06 286.59,293.14 287.10,294.22 287.60,295.31 288.10,296.39 288.61,297.49 289.11,298.58 289.61,299.67 290.12,300.77 290.62,301.87 291.13,302.97 291.63,304.07 292.13,305.18 292.64,306.28 293.14,307.38 293.64,308.49 294.15,309.59 294.65,310.70 295.15,311.80 295.66,312.90 296.16,314.01 296.66,315.11 297.17,316.21 297.67,317.31 298.18,318.40 298.68,319.50 299.18,320.59 299.69,321.68 300.19,322.77 300.69,323.85 301.20,324.93 301.70,326.01 302.20,327.09 302.71,328.16 303.21,329.22 303.71,330.29 304.22,331.34 304.72,332.40 305.23,333.45 305.73,334.49 306.23,335.53 306.74,336.56 307.24,337.59 307.74,338.61 308.25,339.63 308.75,340.64 309.25,341.64 309.76,342.63 310.26,343.62 310.76,344.61 311.27,345.58 311.77,346.55 312.28,347.51 312.78,348.46 313.28,349.40 313.79,350.34 314.29,351.26 314.79,352.18 315.30,353.09 315.80,353.99 316.30,354.88 316.81,355.76 317.31,356.63 317.81,357.49 318.32,358.35 318.82,359.19 319.33,360.02 319.83,360.84 320.33,361.65 320.84,362.45 321.34,363.24 321.84,364.01 322.35,364.78 322.85,365.53 323.35,366.28 323.86,367.01 324.36,367.73 324.86,368.44 325.37,369.13 325.87,369.81 326.38,370.48 326.88,371.14 327.38,371.79 327.89,372.42 328.39,373.04 328.89,373.64 329.40,374.23 329.90,374.81 330.40,375.38 330.91,375.93 331.41,376.47 331.91,376.99 332.42,377.50 332.92,378.00 333.43,378.48 333.93,378.95 334.43,379.40 334.94,379.84 335.44,380.27 335.94,380.68 336.45,381.07 336.95,381.46 337.45,381.82 337.96,382.17 338.46,382.51 338.96,382.83 339.47,383.13 339.97,383.42 340.48,383.70 340.98,383.96 341.48,384.20 341.99,384.43 342.49,384.65 342.99,384.84 343.50,385.03 344.00,385.19 344.50,385.35 345.01,385.48 345.51,385.60 346.01,385.71 346.52,385.79 347.02,385.87 347.53,385.92 348.03,385.96 348.53,385.99 349.04,386.00 349.54,385.99 350.04,385.97 350.55,385.93 351.05,385.88 351.55,385.81 352.06,385.73 352.56,385.63 353.06,385.51 353.57,385.38 354.07,385.23 354.58,385.07 355.08,384.89 355.58,384.69 356.09,384.48 356.59,384.26 357.09,384.02 357.60,383.76 358.10,383.49 358.60,383.20 359.11,382.90 359.61,382.58 360.11,382.25 360.62,381.90 361.12,381.54 361.63,381.16 362.13,380.77 362.63,380.36 363.14,379.94 363.64,379.51 364.14,379.06 364.65,378.59 365.15,378.11 365.65,377.62 366.16,377.11 366.66,376.59 367.16,376.06 367.67,375.51 368.17,374.94 368.68,374.37 369.18,373.78 369.68,373.18 370.19,372.56 370.69,371.93 371.19,371.29 371.70,370.63 372.20,369.97 372.70,369.29 373.21,368.59 373.71,367.89 374.21,367.17 374.72,366.45 375.22,365.71 375.73,364.95 376.23,364.19 376.73,363.42 377.24,362.63 377.74,361.83 378.24,361.02 378.75,360.21 379.25,359.38 379.75,358.54 380.26,357.69 380.76,356.83 381.26,355.96 381.77,355.08 382.27,354.19 382.78,353.29 383.28,352.39 383.78,351.47 384.29,350.55 384.79,349.61 385.29,348.67 385.80,347.72 386.30,346.77 386.80,345.80 387.31,344.83 387.81,343.85 388.31,342.86 388.82,341.87 389.32,340.87 389.83,339.86 390.33,338.84 390.83,337.82 391.34,336.80 391.84,335.77 392.34,334.73 392.85,333.69 393.35,332.64 393.85,331.59 394.36,330.53 394.86,329.47 395.36,328.40 395.87,327.33 396.37,326.26 396.88,325.18 397.38,324.10 397.88,323.01 398.39,321.93 398.89,320.84 399.39,319.75 399.90,318.65 400.40,317.56 400.90,316.46 401.41,315.36 401.91,314.26 402.41,313.16 402.92,312.05 403.42,310.95 403.93,309.84 404.43,308.74 404.93,307.64 405.44,306.53 405.94,305.43 406.44,304.33 406.95,303.22 407.45,302.12 407.95,301.02 408.46,299.92 408.96,298.83 409.46,297.73 409.97,296.64 410.47,295.55 410.98,294.47 411.48,293.38 411.98,292.30 412.49,291.22 412.99,290.15 413.49,289.08 414.00,288.01 414.50,286.95 415.00,285.90 415.51,284.84 416.01,283.80 416.52,282.75 417.02,281.72 417.52,280.68 418.03,279.66 418.53,278.64 419.03,277.62 419.54,276.62 420.04,275.62 420.54,274.62 421.05,273.63 421.55,272.65 422.05,271.68 422.56,270.72 423.06,269.76 423.57,268.81 424.07,267.87 424.57,266.94 425.08,266.01 425.58,265.10 426.08,264.19 426.59,263.29 427.09,262.40 427.59,261.52 428.10,260.66 428.60,259.80 429.10,258.95 429.61,258.11 430.11,257.28 430.62,256.46 431.12,255.65 431.62,254.86 432.13,254.07 432.63,253.30 433.13,252.53 433.64,251.78 434.14,251.04 434.64,250.31 435.15,249.60 435.65,248.89 436.15,248.20 436.66,247.52 437.16,246.85 437.67,246.20 438.17,245.56 438.67,244.93 439.18,244.31 439.68,243.71 440.18,243.12 440.69,242.55 441.19,241.98 441.69,241.44 442.20,240.90 442.70,240.38 443.20,239.87 443.71,239.38 444.21,238.90 444.72,238.44 445.22,237.99 445.72,237.55 446.23,237.13 446.73,236.72 447.23,236.33 447.74,235.95 448.24,235.59 448.74,235.24 449.25,234.91 449.75,234.60 450.25,234.29 450.76,234.01 451.26,233.74 451.77,233.48 452.27,233.24 452.77,233.01 453.28,232.80 453.78,232.61 454.28,232.43 454.79,232.27 455.29,232.12 455.79,231.99 456.30,231.87 456.80,231.77 457.30,231.69 457.81,231.62 458.31,231.56 458.82,231.53 459.32,231.51 459.82,231.50 460.33,231.51 460.83,231.54 461.33,231.58 461.84,231.63 462.34,231.71 462.84,231.80 463.35,231.90 463.85,232.02 464.35,232.16 464.86,232.31 465.36,232.48 465.87,232.66 466.37,232.86 466.87,233.07 467.38,233.30 467.88,233.55 468.38,233.81 468.89,234.08 469.39,234.37 469.89,234.68 470.40,235.00 470.90,235.33 471.40,235.69 471.91,236.05 472.41,236.43 472.92,236.83 473.42,237.24 473.92,237.66 474.43,238.10 474.93,238.56 475.43,239.03 475.94,239.51 476.44,240.00 476.94,240.52 477.45,241.04 477.95,241.58 478.45,242.13 478.96,242.70 479.46,243.28 479.97,243.87 480.47,244.47 480.97,245.09 481.48,245.73 481.98,246.37 482.48,247.03 482.99,247.70 483.49,248.38 483.99,249.08 484.50,249.78 485.00,250.50 485.50,251.24 486.01,251.98 486.51,252.73 487.02,253.50 487.52,254.28 488.02,255.07 488.53,255.87 489.03,256.68 489.53,257.50 490.04,258.33 490.54,259.17 491.04,260.02 491.55,260.88 492.05,261.76 492.55,262.64 493.06,263.53 493.56,264.43 494.07,265.34 494.57,266.25 495.07,267.18 495.58,268.12 496.08,269.06 496.58,270.01 497.09,270.97 497.59,271.94 498.09,272.91 498.60,273.89 499.10,274.88 499.60,275.88 500.11,276.88 500.61,277.89 501.12,278.91 501.62,279.93 502.12,280.96 502.63,281.99 503.13,283.03 503.63,284.07 504.14,285.12 504.64,286.17 505.14,287.23 505.65,288.30 506.15,289.36 506.65,290.43 507.16,291.51 507.66,292.59 508.17,293.67 508.67,294.75 509.17,295.84 509.68,296.93 510.18,298.02 510.68,299.12 511.19,300.21 511.69,301.31 512.19,302.41 512.70,303.51 513.20,304.62 513.70,305.72 514.21,306.82 514.71,307.93 515.22,309.03 515.72,310.14 516.22,311.24 516.73,312.34 517.23,313.45 517.73,314.55 518.24,315.65 518.74,316.75 519.24,317.84 519.75,318.94 520.25,320.03 520.75,321.13 521.26,322.21 521.76,323.30 522.27,324.38 522.77,325.46 523.27,326.54 523.78,327.61 524.28,328.68 524.78,329.75 525.29,330.81 525.79,331.86 526.29,332.91 526.80,333.96 527.30,335.00 527.80,336.04 528.31,337.07 528.81,338.09 529.32,339.11 529.82,340.12 530.32,341.13 530.83,342.13 531.33,343.12 531.83,344.11 532.34,345.09 532.84,346.06 533.34,347.02 533.85,347.97 534.35,348.92 534.85,349.86 535.36,350.79 535.86,351.71 536.37,352.63 536.87,353.53 537.37,354.43 537.88,355.31 538.38,356.19 538.88,357.06 539.39,357.91 539.89,358.76 540.39,359.60 540.90,360.42 541.40,361.24 541.90,362.04 542.41,362.84 542.91,363.62 543.42,364.39 543.92,365.15 544.42,365.90 544.93,366.64 545.43,367.36 545.93,368.08 546.44,368.78 546.94,369.47 547.44,370.14 547.95,370.81 548.45,371.46 548.95,372.10 549.46,372.72 549.96,373.34 550.47,373.93 550.97,374.52 551.47,375.09 551.98,375.65 552.48,376.20 552.98,376.73 553.49,377.25 553.99,377.75 554.49,378.24 555.00,378.71 555.50,379.18 556.01,379.62 556.51,380.05 557.01,380.47 557.52,380.88 558.02,381.26 558.52,381.64 559.03,382.00 559.53,382.34 560.03,382.67 560.54,382.98 561.04,383.28 561.54,383.56 562.05,383.83 562.55,384.08 563.06,384.32 563.56,384.54 564.06,384.75 564.57,384.94 565.07,385.11 565.57,385.27 566.08,385.41 566.58,385.54 567.08,385.65 567.59,385.75 568.09,385.83 568.59,385.90 569.10,385.95 569.60,385.98 570.11,386.00 570.61,386.00 571.11,385.99 571.62,385.96 572.12,385.91 572.62,385.85 573.13,385.77 573.63,385.68 574.13,385.57 574.64,385.45 575.14,385.31 575.64,385.15 576.15,384.98 576.65,384.79 577.16,384.59 577.66,384.37 578.16,384.14 578.67,383.89 579.17,383.63 579.67,383.35 580.18,383.05 580.68,382.75 581.18,382.42 581.69,382.08 582.19,381.73 582.69,381.36 583.20,380.97 583.70,380.57 584.21,380.16 584.71,379.73 585.21,379.29 585.72,378.83 586.22,378.36 586.72,377.87 587.23,377.37 587.73,376.86 588.23,376.33 588.74,375.79 589.24,375.23 589.74,374.66 590.25,374.08 590.75,373.48 591.26,372.87 591.76,372.25 592.26,371.62 592.77,370.97 593.27,370.31 593.77,369.63 594.28,368.95 594.78,368.25 595.28,367.54 595.79,366.82 596.29,366.08 596.79,365.34 597.30,364.58 597.80,363.81 598.31,363.03 598.81,362.24 599.31,361.44 599.82,360.62 600.32,359.80 600.82,358.97 601.33,358.12 601.83,357.27 602.33,356.40 602.84,355.53 603.34,354.65 603.84,353.75 604.35,352.85 604.85,351.94 605.36,351.02 605.86,350.09 606.36,349.15 606.87,348.21 607.37,347.25 607.87,346.29 608.38,345.32 608.88,344.35 609.38,343.36 609.89,342.37 610.39,341.38 610.89,340.37 611.40,339.36 611.90,338.34 612.41,337.32 612.91,336.29 613.41,335.26 613.92,334.22 614.42,333.17 614.92,332.12 615.43,331.07 615.93,330.01 616.43,328.94 616.94,327.88 617.44,326.80 617.94,325.73 618.45,324.65 618.95,323.57 619.46,322.48 619.96,321.39 620.46,320.30 620.97,319.21 621.47,318.11 621.97,317.02 622.48,315.92 622.98,314.82 623.48,313.72 623.99,312.61 624.49,311.51 624.99,310.41 625.50,309.30 626.00,308.20 626.51,307.09 627.01,305.99 627.51,304.89 628.02,303.78 628.52,302.68 629.02,301.58 629.53,300.48 630.03,299.39 630.53,298.29 631.04,297.20 631.54,296.11 632.04,295.02 632.55,293.93 633.05,292.85 633.56,291.77 634.06,290.70 634.56,289.62 635.07,288.56 635.57,287.49 636.07,286.43 636.58,285.38 637.08,284.33 637.58,283.28 638.09,282.24 638.59,281.21 639.09,280.18 639.60,279.16 640.10,278.14 640.61,277.13 641.11,276.12 641.61,275.13 642.12,274.14 642.62,273.15 643.12,272.18 643.63,271.21 644.13,270.25 644.63,269.29 645.14,268.35 645.64,267.41 646.14,266.48 646.65,265.56 647.15,264.65 647.66,263.75 648.16,262.85 648.66,261.97 649.17,261.10 649.67,260.23 650.17,259.38 650.68,258.53 651.18,257.70 651.68,256.88 652.19,256.06 652.69,255.26 653.19,254.47 653.70,253.69 654.20,252.92 654.71,252.16 655.21,251.42 655.71,250.68 656.22,249.96 656.72,249.25 657.22,248.55 657.73,247.87 658.23,247.19 658.73,246.53 659.24,245.88 659.74,245.25 660.24,244.63 660.75,244.02 661.25,243.42 661.76,242.84 662.26,242.27 662.76,241.71 663.27,241.17 663.77,240.64 664.27,240.13 664.78,239.63 665.28,239.14 665.78,238.67 666.29,238.21 666.79,237.77 667.29,237.34 667.80,236.93 668.30,236.53 668.81,236.14 669.31,235.77 669.81,235.42 670.32,235.08 670.82,234.75 671.32,234.45 671.83,234.15 672.33,233.87 672.83,233.61 673.34,233.36 673.84,233.13 674.34,232.91 674.85,232.71 675.35,232.52 675.86,232.35 676.36,232.19 676.86,232.05 677.37,231.93 677.87,231.82 678.37,231.73 678.88,231.65 679.38,231.59 679.88,231.54 680.39,231.51 680.89,231.50 681.39,231.50 681.90,231.52 682.40,231.55 682.91,231.60 683.41,231.67 683.91,231.75 684.42,231.85 684.92,231.96 685.42,232.09 685.93,232.23 686.43,232.39 686.93,232.56 687.44,232.75 687.94,232.96 688.44,233.18 688.95,233.42 689.45,233.67 689.96,233.94 690.46,234.22 690.96,234.52 691.47,234.83 691.97,235.16 692.47,235.50 692.98,235.86 693.48,236.24 693.98,236.62 694.49,237.03 694.99,237.45 695.49,237.88 696.00,238.32 696.50,238.79 697.01,239.26 697.51,239.75 698.01,240.25 698.52,240.77 699.02,241.30 699.52,241.85 700.03,242.41 700.53,242.98 701.03,243.57 701.54,244.16 702.04,244.78 702.55,245.40 703.05,246.04 703.55,246.69 704.06,247.36 704.56,248.03 705.06,248.72 705.57,249.42 706.07,250.14 706.57,250.86 707.08,251.60 707.58,252.35 708.08,253.11 708.59,253.88 709.09,254.66 709.60,255.46 710.10,256.26 710.60,257.08 711.11,257.90 711.61,258.74 712.11,259.59 712.62,260.44 713.12,261.31 713.62,262.19 714.13,263.07 714.63,263.97 715.13,264.87 715.64,265.79 716.14,266.71 716.65,267.64 717.15,268.58 717.65,269.53 718.16,270.48 718.66,271.44 719.16,272.41 719.67,273.39 720.17,274.38 720.67,275.37 721.18,276.37 721.68,277.38 722.18,278.39 722.69,279.41 723.19,280.43 723.70,281.46 724.20,282.50 724.70,283.54 725.21,284.59 725.71,285.64 726.21,286.69 726.72,287.75 727.22,288.82 727.72,289.89 728.23,290.96 728.73,292.04 729.23,293.12 729.74,294.20 730.24,295.29 730.75,296.37 731.25,297.47 731.75,298.56 732.26,299.66 732.76,300.75 733.26,301.85 733.77,302.95 734.27,304.05 734.77,305.16 735.28,306.26 735.78,307.36 736.28,308.47 736.79,309.57 737.29,310.68 737.80,311.78 738.30,312.88 738.80,313.99 739.31,315.09 739.81,316.19 740.31,317.29 740.82,318.38 741.32,319.48 741.82,320.57 742.33,321.66 742.83,322.75 743.33,323.83 743.84,324.91 744.34,325.99 744.85,327.07 745.35,328.14 745.85,329.20 746.36,330.27 746.86,331.33 747.36,332.38 747.87,333.43 748.37,334.47 748.87,335.51 749.38,336.54 749.88,337.57 750.38,338.59 750.89,339.61 751.39,340.62 751.90,341.62 752.40,342.62 752.90,343.61 753.41,344.59 753.91,345.56 754.41,346.53 754.92,347.49 755.42,348.44 755.92,349.38 756.43,350.32 756.93,351.25 757.43,352.16 757.94,353.07 758.44,353.97 758.95,354.86 759.45,355.74 759.95,356.62 760.46,357.48 760.96,358.33 761.46,359.17 761.97,360.00 762.47,360.82 762.97,361.63 763.48,362.43 763.98,363.22 764.48,364.00 764.99,364.77 765.49,365.52 766.00,366.26 766.50,367.00 767.00,367.72 767.51,368.42 768.01,369.12 768.51,369.80 769.02,370.47 769.52,371.13 770.02,371.77 770.53,372.41 771.03,373.03 771.53,373.63 772.04,374.22 772.54,374.80 773.05,375.37 773.55,375.92 774.05,376.46 774.56,376.98 775.06,377.50 775.56,377.99 776.07,378.47 776.57,378.94 777.07,379.40 777.58,379.84 778.08,380.26 778.58,380.67 779.09,381.07 779.59,381.45 780.10,381.81 780.60,382.17 781.10,382.50 781.61,382.82 782.11,383.13 782.61,383.42 783.12,383.69 783.62,383.95 784.12,384.20 784.63,384.43 785.13,384.64 785.63,384.84 786.14,385.02 786.64,385.19 787.15,385.34 787.65,385.48 788.15,385.60 788.66,385.70 789.16,385.79 789.66,385.87 790.17,385.92 790.67,385.96 791.17,385.99 791.68,386.00 792.18,385.99 792.68,385.97 793.19,385.94 793.69,385.88 794.20,385.81 794.70,385.73 795.20,385.63 795.71,385.51 796.21,385.38 796.71,385.23 797.22,385.07 797.72,384.89 798.22,384.70 798.73,384.49 799.23,384.26 799.73,384.02 800.24,383.76 800.74,383.49 801.25,383.21 801.75,382.90 802.25,382.59 802.76,382.26 803.26,381.91 803.76,381.55 804.27,381.17 804.77,380.78 805.27,380.37 805.78,379.95 806.28,379.51 806.78,379.06 807.29,378.60 807.79,378.12 808.30,377.63 808.80,377.12 809.30,376.60 809.81,376.06 810.31,375.52 810.81,374.95 811.32,374.38 811.82,373.79 812.32,373.19 812.83,372.57 813.33,371.94 813.83,371.30 814.34,370.65 814.84,369.98 815.35,369.30 815.85,368.61 816.35,367.90 816.86,367.19 817.36,366.46 817.86,365.72 818.37,364.97 818.87,364.20 819.37,363.43 819.88,362.64 820.38,361.85 820.88,361.04 821.39,360.22 821.89,359.39 822.40,358.55 822.90,357.70 823.40,356.84 823.91,355.98 824.41,355.10 824.91,354.21 825.42,353.31 825.92,352.40 826.42,351.49 826.93,350.56 827.43,349.63 827.93,348.69 828.44,347.74 828.94,346.78 829.45,345.82 829.95,344.85 830.45,343.87 830.96,342.88 831.46,341.88 831.96,340.88 832.47,339.88 832.97,338.86 833.47,337.84 833.98,336.82 834.48,335.78 834.98,334.75 835.49,333.70 835.99,332.66 836.50,331.60 837.00,330.55 837.50,329.49 838.01,328.42 838.51,327.35 839.01,326.28 839.52,325.20 840.02,324.12 840.52,323.03 841.03,321.95 841.53,320.86 842.04,319.77 842.54,318.67 843.04,317.58 843.55,316.48 844.05,315.38 844.55,314.28 845.06,313.17 845.56,312.07 846.06,310.97 846.57,309.86 847.07,308.76 847.57,307.66 848.08,306.55 848.58,305.45 849.09,304.34 849.59,303.24 850.09,302.14 850.60,301.04 851.10,299.94 851.60,298.85 852.11,297.75 852.61,296.66 853.11,295.57 853.62,294.49 854.12,293.40 854.62,292.32 855.13,291.24 855.63,290.17 856.14,289.10 856.64,288.03 857.14,286.97 857.65,285.91 858.15,284.86 858.65,283.81 859.16,282.77 859.66,281.73 860.16,280.70 860.67,279.68 861.17,278.66 861.67,277.64 862.18,276.63 862.68,275.63 863.19,274.64 863.69,273.65 864.19,272.67 864.70,271.70 865.20,270.73 865.70,269.78 866.21,268.83 866.71,267.89 867.21,266.95 867.72,266.03 868.22,265.11 868.72,264.21 869.23,263.31 869.73,262.42 870.24,261.54 870.74,260.67 871.24,259.81 871.75,258.96 872.25,258.12 872.75,257.29 873.26,256.48 873.76,255.67 874.26,254.87 874.77,254.08 875.27,253.31 875.77,252.55 876.28,251.79 876.78,251.05 877.29,250.33 877.79,249.61 878.29,248.91 878.80,248.21 879.30,247.53 879.80,246.87 880.31,246.21 880.81,245.57 881.31,244.94 881.82,244.32 882.32,243.72 882.82,243.13 883.33,242.56 883.83,241.99 884.34,241.44 884.84,240.91 885.34,240.39 885.85,239.88 886.35,239.39 886.85,238.91 887.36,238.44 887.86,237.99 888.36,237.56 888.87,237.14 889.37,236.73 889.87,236.34 890.38,235.96 890.88,235.60 891.39,235.25 891.89,234.92 892.39,234.60 892.90,234.30 893.40,234.01 893.90,233.74 894.41,233.48 894.91,233.24 895.41,233.02 895.92,232.81 896.42,232.61 896.92,232.43 897.43,232.27 897.93,232.12 898.44,231.99 898.94,231.87 899.44,231.77 899.95,231.69 900.45,231.62 900.95,231.57 901.46,231.53 901.96,231.51 902.46,231.50 902.97,231.51 903.47,231.54 903.97,231.58 904.48,231.63 904.98,231.71 905.49,231.79 905.99,231.90 906.49,232.02 907.00,232.15 907.50,232.31 908.00,232.47 908.51,232.66 909.01,232.85 909.51,233.07 910.02,233.30 910.52,233.54 911.02,233.80 911.53,234.08 912.03,234.37 912.54,234.67 913.04,234.99 913.54,235.33 914.05,235.68 914.55,236.04 915.05,236.43 915.56,236.82 916.06,237.23 916.56,237.66 917.07,238.10 917.57,238.55 918.07,239.02 918.58,239.50 919.08,240.00 919.59,240.51 920.09,241.03 920.59,241.57 921.10,242.12 921.60,242.69 922.10,243.27 922.61,243.86 923.11,244.46 923.61,245.08 924.12,245.71 924.62,246.36 925.12,247.02 925.63,247.69 926.13,248.37 926.64,249.06 927.14,249.77 927.64,250.49 928.15,251.22 928.65,251.97 929.15,252.72 929.66,253.49 930.16,254.26 930.66,255.05 931.17,255.85 931.67,256.66 932.17,257.48 932.68,258.31 933.18,259.15 933.69,260.01 934.19,260.87 934.69,261.74 935.20,262.62 935.70,263.51 936.20,264.41 936.71,265.32 937.21,266.24 937.71,267.16 938.22,268.10 938.72,269.04 939.22,269.99 939.73,270.95 940.23,271.92 940.74,272.89 941.24,273.88 941.74,274.87 942.25,275.86 942.75,276.86 943.25,277.87 943.76,278.89 944.26,279.91 944.76,280.94 945.27,281.97 945.77,283.01 946.27,284.05 946.78,285.10 947.28,286.16 947.79,287.21 948.29,288.28 948.79,289.34 949.30,290.41 949.80,291.49 950.30,292.57 950.81,293.65 951.31,294.73 951.81,295.82 952.32,296.91 952.82,298.00 953.32,299.10 953.83,300.19 954.33,301.29 954.84,302.39 955.34,303.49 955.84,304.60 956.35,305.70 956.85,306.80 957.35,307.91 957.86,309.01 958.36,310.12 958.86,311.22 959.37,312.32 959.87,313.43 960.37,314.53 960.88,315.63 961.38,316.73 961.89,317.83 962.39,318.92 962.89,320.01 963.40,321.11 963.90,322.19 964.40,323.28 964.91,324.36 965.41,325.44 965.91,326.52 966.42,327.59 966.92,328.66 967.42,329.73 967.93,330.79 968.43,331.84 968.94,332.90 969.44,333.94 969.94,334.98 970.45,336.02 970.95,337.05 971.45,338.07 971.96,339.09 972.46,340.11 972.96,341.11 973.47,342.11 973.97,343.10 974.47,344.09 974.98,345.07 975.48,346.04 975.99,347.00 976.49,347.96 976.99,348.91 977.50,349.84 978.00,350.78" stroke="#2563eb"/>
<polyline points="273.50,308.76 274.00,308.76 274.51,308.76 275.01,308.76 275.51,308.76 276.02,308.76 276.52,308.76 277.03,308.76 277.53,308.76 278.03,308.76 278.54,308.76 279.04,308.76 279.54,308.76 280.05,308.76 280.55,308.76 281.05,308.76 281.56,308.76 282.06,308.76 282.56,308.75 283.07,308.75 283.57,308.75 284.08,308.75 284.58,308.75 285.08,308.75 285.59,308.75 286.09,308.75 286.59,308.74 287.10,308.74 287.60,308.74 288.10,308.74 288.61,308.73 289.11,308.73 289.61,308.73 290.12,308.73 290.62,308.72 291.13,308.72 291.63,308.72 292.13,308.71 292.64,308.71 293.14,308.71 293.64,308.70 294.15,308.70 294.65,308.70 295.15,308.69 295.66,308.69 296.16,308.68 296.66,308.68 297.17,308.68 297.67,308.67 298.18,308.67 298.68,308.66 299.18,308.66 299.69,308.65 300.19,308.65 300.69,308.65 301.20,308.64 301.70,308.64 302.20,308.63 302.71,308.63 303.21,308.63 303.71,308.62 304.22,308.62 304.72,308.62 305.23,308.61 305.73,308.61 306.23,308.61 306.74,308.61 307.24,308.60 307.74,308.60 308.25,308.60 308.75,308.60 309.25,308.60 309.76,308.60 310.26,308.60 310.76,308.60 311.27,308.60 311.77,308.60 312.28,308.61 312.78,308.61 313.28,308.61 313.79,308.62 314.29,308.62 314.79,308.63 315.30,308.63 315.80,308.64 316.30,308.65 316.81,308.65 317.31,308.66 317.81,308.67 318.32,308.68 318.82,308.69 319.33,308.70 319.83,308.71 320.33,308.72 320.84,308.73 321.34,308.75 321.84,308.76 322.35,308.77 322.85,308.79 323.35,308.80 323.86,308.82 324.36,308.84 324.86,308.85 325.37,308.87 325.87,308.88 326.38,308.90 326.88,308.92 327.38,308.94 327.89,308.96 328.39,308.97 328.89,308.99 329.40,309.01 329.90,309.03 330.40,309.05 330.91,309.06 331.41,309.08 331.91,309.10 332.42,309.12 332.92,309.13 333.43,309.15 333.93,309.17 334.43,309.18 334.94,309.20 335.44,309.21 335.94,309.22 336.45,309.24 336.95,309.25 337.45,309.26 337.96,309.27 338.46,309.28 338.96,309.29 339.47,309.30 339.97,309.30 340.48,309.31 340.98,309.31 341.48,309.32 341.99,309.32 342.49,309.32 342.99,309.32 343.50,309.32 344.00,309.31 344.50,309.31 345.01,309.30 345.51,309.29 346.01,309.29 346.52,309.27 347.02,309.26 347.53,309.25 348.03,309.24 348.53,309.22 349.04,309.20 349.54,309.19 350.04,309.17 350.55,309.15 351.05,309.13 351.55,309.10 352.06,309.08 352.56,309.06 353.06,309.03 353.57,309.01 354.07,308.98 354.58,308.95 355.08,308.93 355.58,308.90 356.09,308.87 356.59,308.84 357.09,308.82 357.60,308.79 358.10,308.76 358.60,308.73 359.11,308.71 359.61,308.68 360.11,308.66 360.62,308.63 361.12,308.61 361.63,308.58 362.13,308.56 362.63,308.54 363.14,308.52 363.64,308.51 364.14,308.49 364.65,308.48 365.15,308.46 365.65,308.45 366.16,308.44 366.66,308.44 367.16,308.43 367.67,308.43 368.17,308.43 368.68,308.43 369.18,308.43 369.68,308.44 370.19,308.45 370.69,308.46 371.19,308.47 371.70,308.49 372.20,308.50 372.70,308.52 373.21,308.55 373.71,308.57 374.21,308.59 374.72,308.62 375.22,308.65 375.73,308.68 376.23,308.71 376.73,308.75 377.24,308.78 377.74,308.82 378.24,308.86 378.75,308.89 379.25,308.93 379.75,308.97 380.26,309.01 380.76,309.04 381.26,309.08 381.77,309.12 382.27,309.15 382.78,309.18 383.28,309.22 383.78,309.25 384.29,309.27 384.79,309.30 385.29,309.32 385.80,309.34 386.30,309.35 386.80,309.37 387.31,309.37 387.81,309.38 388.31,309.38 388.82,309.37 389.32,309.36 389.83,309.34 390.33,309.32 390.83,309.29 391.34,309.25 391.84,309.21 392.34,309.16 392.85,309.11 393.35,309.04 393.85,308.97 394.36,308.90 394.86,308.81 395.36,308.72 395.87,308.62 396.37,308.51 396.88,308.40 397.38,308.28 397.88,308.15 398.39,308.01 398.89,307.87 399.39,307.71 399.90,307.56 400.40,307.39 400.90,307.22 401.41,307.04 401.91,306.86 402.41,306.67 402.92,306.48 403.42,306.28 403.93,306.08 404.43,305.87 404.93,305.66 405.44,305.45 405.94,305.24 406.44,305.02 406.95,304.80 407.45,304.59 407.95,304.37 408.46,304.16 408.96,303.95 409.46,303.74 409.97,303.54 410.47,303.34 410.98,303.14 411.48,302.95 411.98,302.77 412.49,302.60 412.99,302.43 413.49,302.27 414.00,302.13 414.50,302.00 415.00,301.87 415.51,301.76 416.01,301.67 416.52,301.59 417.02,301.52 417.52,301.47 418.03,301.44 418.53,301.43 419.03,301.43 419.54,301.45 420.04,301.49 420.54,301.55 421.05,301.63 421.55,301.73 422.05,301.86 422.56,302.00 423.06,302.17 423.57,302.35 424.07,302.56 424.57,302.80 425.08,303.05 425.58,303.33 426.08,303.63 426.59,303.95 427.09,304.29 427.59,304.65 428.10,305.04 428.60,305.44 429.10,305.86 429.61,306.31 430.11,306.77 430.62,307.25 431.12,307.75 431.62,308.26 432.13,308.79 432.63,309.33 433.13,309.88 433.64,310.45 434.14,311.03 434.64,311.61 435.15,312.20 435.65,312.80 436.15,313.41 436.66,314.01 437.16,314.62 437.67,315.23 438.17,315.84 438.67,316.44 439.18,317.04 439.68,317.64 440.18,318.22 440.69,318.80 441.19,319.36 441.69,319.91 442.20,320.44 442.70,320.96 443.20,321.46 443.71,321.94 444.21,322.40 444.72,322.84 445.22,323.25 445.72,323.63 446.23,323.99 446.73,324.32 447.23,324.62 447.74,324.89 448.24,325.13 448.74,325.33 449.25,325.50 449.75,325.63 450.25,325.73 450.76,325.80 451.26,325.82 451.77,325.81 452.27,325.76 452.77,325.68 453.28,325.56 453.78,325.40 454.28,325.20 454.79,324.97 455.29,324.70 455.79,324.40 456.30,324.06 456.80,323.69 457.30,323.29 457.81,322.85 458.31,322.38 458.82,321.89 459.32,321.36 459.82,320.82 460.33,320.24 460.83,319.65 461.33,319.03 461.84,318.40 462.34,317.75 462.84,317.08 463.35,316.41 463.85,315.72 464.35,315.03 464.86,314.33 465.36,313.63 465.87,312.93 466.37,312.23 466.87,311.54 467.38,310.85 467.88,310.18 468.38,309.51 468.89,308.87 469.39,308.24 469.89,307.63 470.40,307.04 470.90,306.47 471.40,305.94 471.91,305.43 472.41,304.95 472.92,304.51 473.42,304.10 473.92,303.73 474.43,303.39 474.93,303.10 475.43,302.84 475.94,302.63 476.44,302.46 476.94,302.33 477.45,302.24 477.95,302.20 478.45,302.20 478.96,302.25 479.46,302.34 479.97,302.48 480.47,302.66 480.97,302.88 481.48,303.14 481.98,303.44 482.48,303.78 482.99,304.16 483.49,304.58 483.99,305.02 484.50,305.50 485.00,306.00 485.50,306.54 486.01,307.09 486.51,307.67 487.02,308.26 487.52,308.87 488.02,309.49 488.53,310.11 489.03,310.74 489.53,311.37 490.04,311.99 490.54,312.61 491.04,313.22 491.55,313.81 492.05,314.38 492.55,314.92 493.06,315.44 493.56,315.93 494.07,316.38 494.57,316.79 495.07,317.16 495.58,317.48 496.08,317.75 496.58,317.96 497.09,318.11 497.59,318.21 498.09,318.23 498.60,318.19 499.10,318.08 499.60,317.89 500.11,317.63 500.61,317.29 501.12,316.87 501.62,316.37 502.12,315.78 502.63,315.11 503.13,314.35 503.63,313.51 504.14,312.59 504.64,311.57 505.14,310.47 505.65,309.29 506.15,308.02 506.65,306.67 507.16,305.24 507.66,303.73 508.17,302.15 508.67,300.49 509.17,298.77 509.68,296.98 510.18,295.12 510.68,293.21 511.19,291.25 511.69,289.24 512.19,287.18 512.70,285.09 513.20,282.96 513.70,280.81 514.21,278.63 514.71,276.45 515.22,274.25 515.72,272.06 516.22,269.87 516.73,267.70 517.23,265.54 517.73,263.42 518.24,261.33 518.74,259.29 519.24,257.29 519.75,255.36 520.25,253.49 520.75,251.69 521.26,249.97 521.76,248.35 522.27,246.81 522.77,245.38 523.27,244.06 523.78,242.86 524.28,241.77 524.78,240.82 525.29,239.99 525.79,239.31 526.29,238.78 526.80,238.39 527.30,238.15 527.80,238.08 528.31,238.17 528.81,238.42 529.32,238.84 529.82,239.43 530.32,240.19 530.83,241.13 531.33,242.24 531.83,243.52 532.34,244.99 532.84,246.62 533.34,248.43 533.85,250.41 534.35,252.55 534.85,254.86 535.36,257.34 535.86,259.97 536.37,262.76 536.87,265.69 537.37,268.77 537.88,271.99 538.38,275.34 538.88,278.81 539.39,282.40 539.89,286.09 540.39,289.89 540.90,293.78 541.40,297.75 541.90,301.80 542.41,305.91 542.91,310.07 543.42,314.28 543.92,318.52 544.42,322.78 544.93,327.05 545.43,331.33 545.93,335.59 546.44,339.83 546.94,344.04 547.44,348.21 547.95,352.32 548.45,356.37 548.95,360.34 549.46,364.22 549.96,368.01 550.47,371.69 550.97,375.25 551.47,378.68 551.98,381.98 552.48,385.13 552.98,388.12 553.49,390.95 553.99,393.62 554.49,396.10 555.00,398.40 555.50,400.51 556.01,402.43 556.51,404.14 557.01,405.65 557.52,406.95 558.02,408.04 558.52,408.91 559.03,409.56 559.53,410.00 560.03,410.22 560.54,410.22 561.04,410.00 561.54,409.57 562.05,408.92 562.55,408.06 563.06,406.99 563.56,405.72 564.06,404.26 564.57,402.59 565.07,400.75 565.57,398.72 566.08,396.52 566.58,394.15 567.08,391.63 567.59,388.96 568.09,386.15 568.59,383.21 569.10,380.15 569.60,376.98 570.11,373.72 570.61,370.37 571.11,366.94 571.62,363.45 572.12,359.91 572.62,356.33 573.13,352.72 573.63,349.09 574.13,345.46 574.64,341.84 575.14,338.24 575.64,334.67 576.15,331.14 576.65,327.67 577.16,324.26 577.66,320.92 578.16,317.68 578.67,314.53 579.17,311.49 579.67,308.57 580.18,305.77 580.68,303.10 581.18,300.57 581.69,298.19 582.19,295.97 582.69,293.91 583.20,292.01 583.70,290.28 584.21,288.73 584.71,287.35 585.21,286.16 585.72,285.15 586.22,284.32 586.72,283.67 587.23,283.21 587.73,282.93 588.23,282.82 588.74,282.90 589.24,283.15 589.74,283.57 590.25,284.15 590.75,284.89 591.26,285.79 591.76,286.83 592.26,288.01 592.77,289.33 593.27,290.76 593.77,292.31 594.28,293.97 594.78,295.72 595.28,297.55 595.79,299.45 596.29,301.42 596.79,303.44 597.30,305.49 597.80,307.57 598.31,309.67 598.81,311.77 599.31,313.86 599.82,315.93 600.32,317.96 600.82,319.95 601.33,321.88 601.83,323.73 602.33,325.51 602.84,327.19 603.34,328.77 603.84,330.23 604.35,331.57 604.85,332.77 605.36,333.82 605.86,334.73 606.36,335.47 606.87,336.03 607.37,336.43 607.87,336.63 608.38,336.65 608.88,336.47 609.38,336.10 609.89,335.52 610.39,334.74 610.89,333.74 611.40,332.54 611.90,331.13 612.41,329.51 612.91,327.69 613.41,325.66 613.92,323.42 614.42,320.99 614.92,318.36 615.43,315.54 615.93,312.54 616.43,309.36 616.94,306.02 617.44,302.51 617.94,298.85 618.45,295.05 618.95,291.12 619.46,287.07 619.96,282.91 620.46,278.66 620.97,274.32 621.47,269.91 621.97,265.44 622.48,260.92 622.98,256.38 623.48,251.82 623.99,247.26 624.49,242.71 624.99,238.19 625.50,233.72 626.00,229.30 626.51,224.96 627.01,220.70 627.51,216.55 628.02,212.51 628.52,208.61 629.02,204.85 629.53,201.25 630.03,197.82 630.53,194.58 631.04,191.53 631.54,188.69 632.04,186.07 632.55,183.69 633.05,181.54 633.56,179.64 634.06,178.00 634.56,176.63 635.07,175.53 635.57,174.70 636.07,174.16 636.58,173.91 637.08,173.96 637.58,174.29 638.09,174.93 638.59,175.86 639.09,177.09 639.60,178.61 640.10,180.43 640.61,182.54 641.11,184.94 641.61,187.63 642.12,190.59 642.62,193.82 643.12,197.32 643.63,201.08 644.13,205.09 644.63,209.33 645.14,213.81 645.64,218.50 646.14,223.40 646.65,228.49 647.15,233.77 647.66,239.21 648.16,244.81 648.66,250.54 649.17,256.41 649.67,262.38 650.17,268.45 650.68,274.60 651.18,280.82 651.68,287.08 652.19,293.37 652.69,299.68 653.19,305.99 653.70,312.28 654.20,318.54 654.71,324.75 655.21,330.90 655.71,336.96 656.22,342.94 656.72,348.80 657.22,354.54 657.73,360.14 658.23,365.60 658.73,370.88 659.24,375.99 659.74,380.92 660.24,385.64 660.75,390.16 661.25,394.45 661.76,398.51 662.26,402.34 662.76,405.93 663.27,409.26 663.77,412.33 664.27,415.15 664.78,417.69 665.28,419.97 665.78,421.97 666.29,423.69 666.79,425.14 667.29,426.32 667.80,427.22 668.30,427.84 668.81,428.19 669.31,428.28 669.81,428.10 670.32,427.66 670.82,426.96 671.32,426.02 671.83,424.83 672.33,423.41 672.83,421.76 673.34,419.90 673.84,417.83 674.34,415.56 674.85,413.10 675.35,410.46 675.86,407.66 676.36,404.70 676.86,401.59 677.37,398.36 677.87,395.01 678.37,391.55 678.88,387.99 679.38,384.36 679.88,380.65 680.39,376.89 680.89,373.09 681.39,369.25 681.90,365.40 682.40,361.54 682.91,357.69 683.41,353.86 683.91,350.06 684.42,346.29 684.92,342.59 685.42,338.94 685.93,335.37 686.43,331.88 686.93,328.49 687.44,325.19 687.94,322.01 688.44,318.94 688.95,316.00 689.45,313.19 689.96,310.51 690.46,307.98 690.96,305.60 691.47,303.36 691.97,301.28 692.47,299.36 692.98,297.60 693.48,296.00 693.98,294.57 694.49,293.29 694.99,292.18 695.49,291.23 696.00,290.44 696.50,289.81 697.01,289.33 697.51,289.00 698.01,288.82 698.52,288.79 699.02,288.89 699.52,289.13 700.03,289.50 700.53,289.98 701.03,290.59 701.54,291.30 702.04,292.11 702.55,293.02 703.05,294.01 703.55,295.09 704.06,296.23 704.56,297.44 705.06,298.69 705.57,300.00 706.07,301.34 706.57,302.71 707.08,304.10 707.58,305.50 708.08,306.91 708.59,308.31 709.09,309.70 709.60,311.06 710.10,312.40 710.60,313.70 711.11,314.96 711.61,316.17 712.11,317.32 712.62,318.40 713.12,319.42 713.62,320.36 714.13,321.23 714.63,322.00 715.13,322.69 715.64,323.28 716.14,323.78 716.65,324.18 717.15,324.47 717.65,324.66 718.16,324.74 718.66,324.71 719.16,324.58 719.67,324.33 720.17,323.98 720.67,323.52 721.18,322.95 721.68,322.27 722.18,321.49 722.69,320.61 723.19,319.62 723.70,318.55 724.20,317.38 724.70,316.12 725.21,314.78 725.71,313.35 726.21,311.85 726.72,310.29 727.22,308.65 727.72,306.96 728.23,305.22 728.73,303.42 729.23,301.59 729.74,299.72 730.24,297.82 730.75,295.91 731.25,293.97 731.75,292.03 732.26,290.09 732.76,288.15 733.26,286.22 733.77,284.31 734.27,282.42 734.77,280.56 735.28,278.74 735.78,276.97 736.28,275.24 736.79,273.57 737.29,271.96 737.80,270.41 738.30,268.93 738.80,267.53 739.31,266.21 739.81,264.97 740.31,263.82 740.82,262.77 741.32,261.80 741.82,260.94 742.33,260.18 742.83,259.51 743.33,258.96 743.84,258.51 744.34,258.17 744.85,257.93 745.35,257.81 745.85,257.79 746.36,257.89 746.86,258.09 747.36,258.40 747.87,258.82 748.37,259.34 748.87,259.97 749.38,260.70 749.88,261.52 750.38,262.45 750.89,263.46 751.39,264.57 751.90,265.76 752.40,267.03 752.90,268.39 753.41,269.81 753.91,271.31 754.41,272.87 754.92,274.50 755.42,276.18 755.92,277.91 756.43,279.69 756.93,281.51 757.43,283.36 757.94,285.25 758.44,287.16 758.95,289.09 759.45,291.04 759.95,292.99 760.46,294.96 760.96,296.92 761.46,298.87 761.97,300.82 762.47,302.75 762.97,304.66 763.48,306.54 763.98,308.40 764.48,310.22 764.99,312.00 765.49,313.74 766.00,315.44 766.50,317.09 767.00,318.69 767.51,320.23 768.01,321.71 768.51,323.13 769.02,324.49 769.52,325.78 770.02,327.00 770.53,328.16 771.03,329.24 771.53,330.25 772.04,331.19 772.54,332.05 773.05,332.83 773.55,333.55 774.05,334.18 774.56,334.74 775.06,335.23 775.56,335.64 776.07,335.98 776.57,336.24 777.07,336.43 777.58,336.56 778.08,336.61 778.58,336.60 779.09,336.52 779.59,336.38 780.10,336.18 780.60,335.92 781.10,335.60 781.61,335.23 782.11,334.81 782.61,334.34 783.12,333.83 783.62,333.27 784.12,332.67 784.63,332.04 785.13,331.37 785.63,330.67 786.14,329.95 786.64,329.20 787.15,328.43 787.65,327.64 788.15,326.83 788.66,326.01 789.16,325.18 789.66,324.35 790.17,323.51 790.67,322.67 791.17,321.83 791.68,321.00 792.18,320.17 792.68,319.35 793.19,318.54 793.69,317.75 794.20,316.97 794.70,316.21 795.20,315.47 795.71,314.74 796.21,314.04 796.71,313.37 797.22,312.72 797.72,312.09 798.22,311.49 798.73,310.92 799.23,310.38 799.73,309.87 800.24,309.39 800.74,308.94 801.25,308.52 801.75,308.13 802.25,307.77 802.76,307.45 803.26,307.15 803.76,306.88 804.27,306.65 804.77,306.44 805.27,306.26 805.78,306.12 806.28,305.99 806.78,305.90 807.29,305.83 807.79,305.78 808.30,305.76 808.80,305.76 809.30,305.78 809.81,305.83 810.31,305.89 810.81,305.97 811.32,306.06 811.82,306.17 812.32,306.30 812.83,306.43 813.33,306.58 813.83,306.74 814.34,306.90 814.84,307.08 815.35,307.25 815.85,307.44 816.35,307.62 816.86,307.81 817.36,308.00 817.86,308.19 818.37,308.37 818.87,308.56 819.37,308.74 819.88,308.91 820.38,309.08 820.88,309.25 821.39,309.40 821.89,309.55 822.40,309.69 822.90,309.82 823.40,309.95 823.91,310.06 824.41,310.16 824.91,310.24 825.42,310.32 825.92,310.39 826.42,310.44 826.93,310.48 827.43,310.51 827.93,310.53 828.44,310.53 828.94,310.53 829.45,310.51 829.95,310.48 830.45,310.43 830.96,310.38 831.46,310.32 831.96,310.24 832.47,310.16 832.97,310.06 833.47,309.96 833.98,309.84 834.48,309.72 834.98,309.60 835.49,309.46 835.99,309.32 836.50,309.17 837.00,309.02 837.50,308.86 838.01,308.70 838.51,308.54 839.01,308.37 839.52,308.20 840.02,308.03 840.52,307.86 841.03,307.69 841.53,307.52 842.04,307.36 842.54,307.19 843.04,307.03 843.55,306.87 844.05,306.71 844.55,306.56 845.06,306.41 845.56,306.27 846.06,306.13 846.57,306.00 847.07,305.87 847.57,305.75 848.08,305.64 848.58,305.54 849.09,305.44 849.59,305.36 850.09,305.28 850.60,305.20 851.10,305.14 851.60,305.08 852.11,305.04 852.61,305.00 853.11,304.97 853.62,304.95 854.12,304.94 854.62,304.93 855.13,304.94 855.63,304.95 856.14,304.97 856.64,305.00 857.14,305.04 857.65,305.08 858.15,305.14 858.65,305.19 859.16,305.26 859.66,305.33 860.16,305.41 860.67,305.49 861.17,305.58 861.67,305.68 862.18,305.78 862.68,305.88 863.19,305.99 863.69,306.10 864.19,306.21 864.70,306.33 865.20,306.45 865.70,306.57 866.21,306.70 866.71,306.82 867.21,306.95 867.72,307.08 868.22,307.21 868.72,307.33 869.23,307.46 869.73,307.59 870.24,307.71 870.74,307.84 871.24,307.96 871.75,308.08 872.25,308.20 872.75,308.32 873.26,308.43 873.76,308.54 874.26,308.65 874.77,308.76 875.27,308.86 875.77,308.95 876.28,309.05 876.78,309.14 877.29,309.22 877.79,309.30 878.29,309.38 878.80,309.45 879.30,309.52 879.80,309.59 880.31,309.65 880.81,309.70 881.31,309.75 881.82,309.80 882.32,309.84 882.82,309.88 883.33,309.91 883.83,309.94 884.34,309.97 884.84,309.99 885.34,310.00 885.85,310.02 886.35,310.03 886.85,310.03 887.36,310.03 887.86,310.03 888.36,310.03 888.87,310.02 889.37,310.01 889.87,310.00 890.38,309.98 890.88,309.96 891.39,309.94 891.89,309.92 892.39,309.89 892.90,309.86 893.40,309.83 893.90,309.80 894.41,309.77 894.91,309.74 895.41,309.71 895.92,309.67 896.42,309.64 896.92,309.60 897.43,309.56 897.93,309.53 898.44,309.49 898.94,309.45 899.44,309.41 899.95,309.38 900.45,309.34 900.95,309.30 901.46,309.27 901.96,309.23 902.46,309.20 902.97,309.16 903.47,309.13 903.97,309.10 904.48,309.07 904.98,309.04 905.49,309.01 905.99,308.98 906.49,308.95 907.00,308.93 907.50,308.90 908.00,308.88 908.51,308.86 909.01,308.84 909.51,308.82 910.02,308.80 910.52,308.78 911.02,308.77 911.53,308.75 912.03,308.74 912.54,308.73 913.04,308.72 913.54,308.71 914.05,308.70 914.55,308.69 915.05,308.68 915.56,308.68 916.06,308.67 916.56,308.67 917.07,308.67 917.57,308.66 918.07,308.66 918.58,308.66 919.08,308.66 919.59,308.66 920.09,308.67 920.59,308.67 921.10,308.67 921.60,308.67 922.10,308.68 922.61,308.68 923.11,308.68 923.61,308.69 924.12,308.69 924.62,308.70 925.12,308.70 925.63,308.71 926.13,308.71 926.64,308.72 927.14,308.72 927.64,308.73 928.15,308.73 928.65,308.74 929.15,308.74 929.66,308.75 930.16,308.75 930.66,308.76 931.17,308.76 931.67,308.76 932.17,308.77 932.68,308.77 933.18,308.77 933.69,308.78 934.19,308.78 934.69,308.78 935.20,308.78 935.70,308.78 936.20,308.79 936.71,308.79 937.21,308.79 937.71,308.79 938.22,308.79 938.72,308.79 939.22,308.79 939.73,308.79 940.23,308.79 940.74,308.79 941.24,308.78 941.74,308.78 942.25,308.78 942.75,308.78 943.25,308.78 943.76,308.78 944.26,308.77 944.76,308.77 945.27,308.77 945.77,308.77 946.27,308.76 946.78,308.76 947.28,308.76 947.79,308.75 948.29,308.75 948.79,308.75 949.30,308.75 949.80,308.74 950.30,308.74 950.81,308.74 951.31,308.73 951.81,308.73 952.32,308.73 952.82,308.72 953.32,308.72 953.83,308.72 954.33,308.72 954.84,308.71 955.34,308.71 955.84,308.71 956.35,308.71 956.85,308.71 957.35,308.70 957.86,308.70 958.36,308.70 958.86,308.70 959.37,308.70 959.87,308.70 960.37,308.70 960.88,308.70 961.38,308.69 961.89,308.69 962.39,308.69 962.89,308.69 963.40,308.69 963.90,308.69 964.40,308.69 964.91,308.69 965.41,308.69 965.91,308.69 966.42,308.70 966.92,308.70 967.42,308.70 967.93,308.70 968.43,308.70 968.94,308.70 969.44,308.70 969.94,308.70 970.45,308.70 970.95,308.71 971.45,308.71 971.96,308.71 972.46,308.71 972.96,308.71 973.47,308.71 973.97,308.71 974.47,308.72 974.98,308.72 975.48,308.72 975.99,308.72 976.49,308.72 976.99,308.73 977.50,308.73 978.00,308.73" stroke="#11946a"/>
<polyline points="273.50,531.77 274.00,528.67 274.51,525.40 275.01,521.95 275.51,518.33 276.02,514.55 276.52,510.61 277.03,506.50 277.53,502.24 278.03,497.83 278.54,493.27 279.04,488.56 279.54,483.71 280.05,478.73 280.55,473.62 281.05,468.38 281.56,463.01 282.06,457.53 282.56,451.93 283.07,446.23 283.57,440.42 284.08,434.51 284.58,428.50 285.08,422.41 285.59,416.23 286.09,409.98 286.59,403.65 287.10,397.25 287.60,390.79 288.10,384.28 288.61,377.71 289.11,371.09 289.61,364.43 290.12,357.74 290.62,351.01 291.13,344.27 291.63,337.50 292.13,330.72 292.64,323.93 293.14,317.14 293.64,310.36 294.15,303.58 294.65,296.82 295.15,290.07 295.66,283.35 296.16,276.67 296.66,270.02 297.17,263.41 297.67,256.85 298.18,250.34 298.68,243.89 299.18,237.50 299.69,231.18 300.19,224.94 300.69,218.77 301.20,212.68 301.70,206.69 302.20,200.78 302.71,194.98 303.21,189.27 303.71,183.68 304.22,178.19 304.72,172.82 305.23,167.57 305.73,162.44 306.23,157.44 306.74,152.58 307.24,147.84 307.74,143.25 308.25,138.80 308.75,134.50 309.25,130.34 309.76,126.34 310.26,122.49 310.76,118.81 311.27,115.28 311.77,111.92 312.28,108.72 312.78,105.70 313.28,102.84 313.79,100.16 314.29,97.65 314.79,95.32 315.30,93.17 315.80,91.20 316.30,89.41 316.81,87.80 317.31,86.38 317.81,85.14 318.32,84.08 318.82,83.21 319.33,82.53 319.83,82.03 320.33,81.72 320.84,81.60 321.34,81.66 321.84,81.91 322.35,82.34 322.85,82.96 323.35,83.76 323.86,84.75 324.36,85.91 324.86,87.26 325.37,88.79 325.87,90.49 326.38,92.37 326.88,94.42 327.38,96.65 327.89,99.05 328.39,101.61 328.89,104.34 329.40,107.23 329.90,110.28 330.40,113.49 330.91,116.85 331.41,120.37 331.91,124.03 332.42,127.84 332.92,131.79 333.43,135.88 333.93,140.10 334.43,144.45 334.94,148.93 335.44,153.54 335.94,158.26 336.45,163.10 336.95,168.04 337.45,173.10 337.96,178.26 338.46,183.51 338.96,188.86 339.47,194.30 339.97,199.82 340.48,205.42 340.98,211.10 341.48,216.84 341.99,222.65 342.49,228.52 342.99,234.45 343.50,240.43 344.00,246.45 344.50,252.51 345.01,258.61 345.51,264.74 346.01,270.89 346.52,277.06 347.02,283.25 347.53,289.45 348.03,295.65 348.53,301.85 349.04,308.04 349.54,314.23 350.04,320.40 350.55,326.55 351.05,332.67 351.55,338.76 352.06,344.82 352.56,350.83 353.06,356.80 353.57,362.72 354.07,368.59 354.58,374.39 355.08,380.13 355.58,385.80 356.09,391.40 356.59,396.92 357.09,402.35 357.60,407.70 358.10,412.96 358.60,418.12 359.11,423.19 359.61,428.15 360.11,433.00 360.62,437.74 361.12,442.37 361.63,446.88 362.13,451.27 362.63,455.53 363.14,459.66 363.64,463.67 364.14,467.53 364.65,471.26 365.15,474.85 365.65,478.30 366.16,481.60 366.66,484.75 367.16,487.76 367.67,490.61 368.17,493.30 368.68,495.84 369.18,498.22 369.68,500.44 370.19,502.50 370.69,504.40 371.19,506.13 371.70,507.70 372.20,509.10 372.70,510.34 373.21,511.40 373.71,512.30 374.21,513.03 374.72,513.59 375.22,513.98 375.73,514.20 376.23,514.26 376.73,514.14 377.24,513.86 377.74,513.41 378.24,512.79 378.75,512.01 379.25,511.06 379.75,509.95 380.26,508.67 380.76,507.24 381.26,505.64 381.77,503.89 382.27,501.98 382.78,499.91 383.28,497.70 383.78,495.33 384.29,492.81 384.79,490.15 385.29,487.35 385.80,484.40 386.30,481.32 386.80,478.10 387.31,474.75 387.81,471.27 388.31,467.67 388.82,463.94 389.32,460.09 389.83,456.13 390.33,452.06 390.83,447.87 391.34,443.58 391.84,439.19 392.34,434.70 392.85,430.12 393.35,425.45 393.85,420.70 394.36,415.86 394.86,410.94 395.36,405.95 395.87,400.89 396.37,395.77 396.88,390.59 397.38,385.35 397.88,380.06 398.39,374.73 398.89,369.35 399.39,363.93 399.90,358.48 400.40,353.01 400.90,347.50 401.41,341.98 401.91,336.45 402.41,330.90 402.92,325.35 403.42,319.79 403.93,314.24 404.43,308.70 404.93,303.17 405.44,297.66 405.94,292.17 406.44,286.71 406.95,281.27 407.45,275.87 407.95,270.51 408.46,265.20 408.96,259.93 409.46,254.72 409.97,249.56 410.47,244.46 410.98,239.43 411.48,234.46 411.98,229.57 412.49,224.75 412.99,220.02 413.49,215.37 414.00,210.80 414.50,206.33 415.00,201.95 415.51,197.67 416.01,193.50 416.52,189.42 417.02,185.46 417.52,181.60 418.03,177.86 418.53,174.23 419.03,170.73 419.54,167.35 420.04,164.09 420.54,160.95 421.05,157.95 421.55,155.08 422.05,152.34 422.56,149.73 423.06,147.27 423.57,144.94 424.07,142.75 424.57,140.70 425.08,138.80 425.58,137.04 426.08,135.43 426.59,133.96 427.09,132.64 427.59,131.47 428.10,130.44 428.60,129.57 429.10,128.85 429.61,128.27 430.11,127.84 430.62,127.57 431.12,127.44 431.62,127.46 432.13,127.64 432.63,127.96 433.13,128.42 433.64,129.04 434.14,129.80 434.64,130.70 435.15,131.75 435.65,132.95 436.15,134.28 436.66,135.75 437.16,137.36 437.67,139.11 438.17,141.00 438.67,143.01 439.18,145.16 439.68,147.43 440.18,149.83 440.69,152.36 441.19,155.01 441.69,157.77 442.20,160.66 442.70,163.65 443.20,166.76 443.71,169.98 444.21,173.30 444.72,176.72 445.22,180.24 445.72,183.86 446.23,187.57 446.73,191.37 447.23,195.26 447.74,199.22 448.24,203.27 448.74,207.39 449.25,211.59 449.75,215.85 450.25,220.18 450.76,224.56 451.26,229.01 451.77,233.50 452.27,238.05 452.77,242.64 453.28,247.27 453.78,251.93 454.28,256.64 454.79,261.37 455.29,266.12 455.79,270.90 456.30,275.69 456.80,280.50 457.30,285.31 457.81,290.13 458.31,294.95 458.82,299.77 459.32,304.58 459.82,309.38 460.33,314.17 460.83,318.93 461.33,323.67 461.84,328.39 462.34,333.07 462.84,337.73 463.35,342.34 463.85,346.91 464.35,351.43 464.86,355.91 465.36,360.33 465.87,364.70 466.37,369.01 466.87,373.25 467.38,377.43 467.88,381.53 468.38,385.57 468.89,389.53 469.39,393.40 469.89,397.20 470.40,400.91 470.90,404.54 471.40,408.07 471.91,411.51 472.41,414.85 472.92,418.10 473.42,421.24 473.92,424.28 474.43,427.22 474.93,430.05 475.43,432.77 475.94,435.37 476.44,437.87 476.94,440.25 477.45,442.51 477.95,444.66 478.45,446.68 478.96,448.59 479.46,450.37 479.97,452.03 480.47,453.57 480.97,454.98 481.48,456.26 481.98,457.42 482.48,458.46 482.99,459.36 483.49,460.14 483.99,460.79 484.50,461.32 485.00,461.71 485.50,461.98 486.01,462.12 486.51,462.13 487.02,462.02 487.52,461.78 488.02,461.41 488.53,460.92 489.03,460.31 489.53,459.57 490.04,458.71 490.54,457.73 491.04,456.63 491.55,455.42 492.05,454.08 492.55,452.63 493.06,451.07 493.56,449.40 494.07,447.61 494.57,445.72 495.07,443.72 495.58,441.62 496.08,439.41 496.58,437.11 497.09,434.71 497.59,432.22 498.09,429.63 498.60,426.95 499.10,424.19 499.60,421.34 500.11,418.40 500.61,415.39 501.12,412.31 501.62,409.15 502.12,405.92 502.63,402.62 503.13,399.26 503.63,395.83 504.14,392.35 504.64,388.82 505.14,385.23 505.65,381.59 506.15,377.91 506.65,374.19 507.16,370.43 507.66,366.63 508.17,362.80 508.67,358.95 509.17,355.06 509.68,351.16 510.18,347.24 510.68,343.30 511.19,339.35 511.69,335.39 512.19,331.43 512.70,327.47 513.20,323.51 513.70,319.55 514.21,315.61 514.71,311.67 515.22,307.75 515.72,303.85 516.22,299.98 516.73,296.12 517.23,292.30 517.73,288.50 518.24,284.74 518.74,281.02 519.24,277.34 519.75,273.70 520.25,270.11 520.75,266.57 521.26,263.08 521.76,259.65 522.27,256.27 522.77,252.95 523.27,249.70 523.78,246.51 524.28,243.38 524.78,240.33 525.29,237.35 525.79,234.45 526.29,231.62 526.80,228.87 527.30,226.20 527.80,223.61 528.31,221.11 528.81,218.69 529.32,216.36 529.82,214.12 530.32,211.98 530.83,209.92 531.33,207.96 531.83,206.09 532.34,204.32 532.84,202.64 533.34,201.06 533.85,199.59 534.35,198.21 534.85,196.93 535.36,195.75 535.86,194.67 536.37,193.70 536.87,192.82 537.37,192.05 537.88,191.39 538.38,190.82 538.88,190.36 539.39,189.99 539.89,189.73 540.39,189.58 540.90,189.52 541.40,189.56 541.90,189.71 542.41,189.95 542.91,190.29 543.42,190.73 543.92,191.27 544.42,191.90 544.93,192.62 545.43,193.44 545.93,194.36 546.44,195.36 546.94,196.45 547.44,197.63 547.95,198.90 548.45,200.25 548.95,201.69 549.46,203.20 549.96,204.80 550.47,206.47 550.97,208.22 551.47,210.04 551.98,211.94 552.48,213.90 552.98,215.93 553.49,218.03 553.99,220.18 554.49,222.40 555.00,224.68 555.50,227.01 556.01,229.39 556.51,231.83 557.01,234.31 557.52,236.84 558.02,239.41 558.52,242.03 559.03,244.68 559.53,247.36 560.03,250.08 560.54,252.82 561.04,255.60 561.54,258.40 562.05,261.21 562.55,264.05 563.06,266.91 563.56,269.77 564.06,272.65 564.57,275.54 565.07,278.43 565.57,281.32 566.08,284.21 566.58,287.10 567.08,289.98 567.59,292.86 568.09,295.72 568.59,298.58 569.10,301.41 569.60,304.23 570.11,307.02 570.61,309.79 571.11,312.54 571.62,315.25 572.12,317.94 572.62,320.59 573.13,323.21 573.63,325.79 574.13,328.33 574.64,330.83 575.14,333.28 575.64,335.69 576.15,338.05 576.65,340.36 577.16,342.61 577.66,344.82 578.16,346.97 578.67,349.06 579.17,351.09 579.67,353.07 580.18,354.98 580.68,356.83 581.18,358.61 581.69,360.33 582.19,361.99 582.69,363.57 583.20,365.09 583.70,366.54 584.21,367.92 584.71,369.22 585.21,370.46 585.72,371.62 586.22,372.71 586.72,373.72 587.23,374.66 587.73,375.53 588.23,376.33 588.74,377.04 589.24,377.69 589.74,378.26 590.25,378.75 590.75,379.17 591.26,379.52 591.76,379.79 592.26,379.99 592.77,380.12 593.27,380.17 593.77,380.16 594.28,380.07 594.78,379.91 595.28,379.69 595.79,379.39 596.29,379.03 596.79,378.60 597.30,378.11 597.80,377.55 598.31,376.93 598.81,376.25 599.31,375.51 599.82,374.71 600.32,373.86 600.82,372.95 601.33,371.99 601.83,370.97 602.33,369.91 602.84,368.80 603.34,367.64 603.84,366.44 604.35,365.20 604.85,363.91 605.36,362.59 605.86,361.24 606.36,359.85 606.87,358.43 607.37,356.98 607.87,355.50 608.38,354.00 608.88,352.48 609.38,350.94 609.89,349.38 610.39,347.81 610.89,346.22 611.40,344.63 611.90,343.03 612.41,341.43 612.91,339.82 613.41,338.22 613.92,336.62 614.42,335.03 614.92,333.45 615.43,331.88 615.93,330.33 616.43,328.80 616.94,327.29 617.44,325.80 617.94,324.34 618.45,322.92 618.95,321.53 619.46,320.17 619.96,318.86 620.46,317.60 620.97,316.39 621.47,315.23 621.97,314.13 622.48,313.10 622.98,312.14 623.48,311.26 623.99,310.48 624.49,309.79 624.99,309.24 625.50,308.84 626.00,308.66 626.51,308.26 627.01,307.71 627.51,307.02 628.02,306.24 628.52,305.36 629.02,304.40 629.53,303.37 630.03,302.27 630.53,301.11 631.04,299.90 631.54,298.64 632.04,297.33 632.55,295.97 633.05,294.58 633.56,293.16 634.06,291.70 634.56,290.21 635.07,288.70 635.57,287.17 636.07,285.62 636.58,284.05 637.08,282.47 637.58,280.88 638.09,279.28 638.59,277.68 639.09,276.07 639.60,274.47 640.10,272.87 640.61,271.28 641.11,269.69 641.61,268.12 642.12,266.56 642.62,265.02 643.12,263.50 643.63,262.00 644.13,260.52 644.63,259.07 645.14,257.65 645.64,256.26 646.14,254.91 646.65,253.59 647.15,252.30 647.66,251.06 648.16,249.86 648.66,248.70 649.17,247.59 649.67,246.53 650.17,245.51 650.68,244.55 651.18,243.64 651.68,242.79 652.19,241.99 652.69,241.25 653.19,240.57 653.70,239.95 654.20,239.39 654.71,238.90 655.21,238.47 655.71,238.11 656.22,237.81 656.72,237.59 657.22,237.43 657.73,237.34 658.23,237.33 658.73,237.38 659.24,237.51 659.74,237.71 660.24,237.98 660.75,238.33 661.25,238.75 661.76,239.24 662.26,239.81 662.76,240.46 663.27,241.17 663.77,241.97 664.27,242.84 664.78,243.78 665.28,244.79 665.78,245.88 666.29,247.04 666.79,248.28 667.29,249.58 667.80,250.96 668.30,252.41 668.81,253.93 669.31,255.51 669.81,257.17 670.32,258.89 670.82,260.67 671.32,262.52 671.83,264.43 672.33,266.41 672.83,268.44 673.34,270.53 673.84,272.68 674.34,274.89 674.85,277.14 675.35,279.45 675.86,281.81 676.36,284.22 676.86,286.67 677.37,289.17 677.87,291.71 678.37,294.29 678.88,296.91 679.38,299.56 679.88,302.25 680.39,304.96 680.89,307.71 681.39,310.48 681.90,313.27 682.40,316.09 682.91,318.92 683.41,321.78 683.91,324.64 684.42,327.52 684.92,330.40 685.42,333.29 685.93,336.18 686.43,339.07 686.93,341.96 687.44,344.85 687.94,347.73 688.44,350.59 688.95,353.45 689.45,356.29 689.96,359.10 690.46,361.90 690.96,364.68 691.47,367.42 691.97,370.14 692.47,372.82 692.98,375.47 693.48,378.09 693.98,380.66 694.49,383.19 694.99,385.67 695.49,388.11 696.00,390.49 696.50,392.82 697.01,395.10 697.51,397.32 698.01,399.47 698.52,401.57 699.02,403.60 699.52,405.56 700.03,407.46 700.53,409.28 701.03,411.03 701.54,412.70 702.04,414.30 702.55,415.81 703.05,417.25 703.55,418.60 704.06,419.87 704.56,421.05 705.06,422.14 705.57,423.14 706.07,424.06 706.57,424.88 707.08,425.60 707.58,426.23 708.08,426.77 708.59,427.21 709.09,427.55 709.60,427.79 710.10,427.94 710.60,427.98 711.11,427.92 711.61,427.77 712.11,427.51 712.62,427.14 713.12,426.68 713.62,426.11 714.13,425.45 714.63,424.68 715.13,423.80 715.64,422.83 716.14,421.75 716.65,420.57 717.15,419.29 717.65,417.91 718.16,416.44 718.66,414.86 719.16,413.18 719.67,411.41 720.17,409.54 720.67,407.58 721.18,405.52 721.68,403.38 722.18,401.14 722.69,398.81 723.19,396.39 723.70,393.89 724.20,391.30 724.70,388.63 725.21,385.88 725.71,383.05 726.21,380.15 726.72,377.17 727.22,374.12 727.72,370.99 728.23,367.80 728.73,364.55 729.23,361.23 729.74,357.85 730.24,354.42 730.75,350.93 731.25,347.39 731.75,343.80 732.26,340.16 732.76,336.48 733.26,332.76 733.77,329.00 734.27,325.20 734.77,321.38 735.28,317.52 735.78,313.65 736.28,309.75 736.79,305.83 737.29,301.89 737.80,297.95 738.30,293.99 738.80,290.03 739.31,286.07 739.81,282.11 740.31,278.15 740.82,274.20 741.32,270.26 741.82,266.34 742.33,262.44 742.83,258.55 743.33,254.70 743.84,250.87 744.34,247.07 744.85,243.31 745.35,239.59 745.85,235.91 746.36,232.27 746.86,228.68 747.36,225.15 747.87,221.67 748.37,218.24 748.87,214.88 749.38,211.58 749.88,208.35 750.38,205.19 750.89,202.11 751.39,199.10 751.90,196.16 752.40,193.31 752.90,190.55 753.41,187.87 753.91,185.28 754.41,182.79 754.92,180.39 755.42,178.09 755.92,175.88 756.43,173.78 756.93,171.78 757.43,169.89 757.94,168.10 758.44,166.43 758.95,164.87 759.45,163.42 759.95,162.08 760.46,160.87 760.96,159.77 761.46,158.79 761.97,157.93 762.47,157.19 762.97,156.58 763.48,156.09 763.98,155.72 764.48,155.48 764.99,155.37 765.49,155.38 766.00,155.52 766.50,155.79 767.00,156.18 767.51,156.71 768.01,157.36 768.51,158.14 769.02,159.04 769.52,160.08 770.02,161.24 770.53,162.52 771.03,163.93 771.53,165.47 772.04,167.13 772.54,168.91 773.05,170.82 773.55,172.84 774.05,174.99 774.56,177.25 775.06,179.63 775.56,182.13 776.07,184.73 776.57,187.45 777.07,190.28 777.58,193.22 778.08,196.26 778.58,199.40 779.09,202.65 779.59,205.99 780.10,209.43 780.60,212.96 781.10,216.59 781.61,220.30 782.11,224.10 782.61,227.97 783.12,231.93 783.62,235.97 784.12,240.07 784.63,244.25 785.13,248.49 785.63,252.80 786.14,257.17 786.64,261.59 787.15,266.07 787.65,270.59 788.15,275.16 788.66,279.77 789.16,284.43 789.66,289.11 790.17,293.83 790.67,298.57 791.17,303.33 791.68,308.12 792.18,312.92 792.68,317.73 793.19,322.55 793.69,327.37 794.20,332.19 794.70,337.00 795.20,341.81 795.71,346.60 796.21,351.38 796.71,356.13 797.22,360.86 797.72,365.57 798.22,370.23 798.73,374.86 799.23,379.45 799.73,384.00 800.24,388.49 800.74,392.94 801.25,397.32 801.75,401.65 802.25,405.91 802.76,410.11 803.26,414.23 803.76,418.28 804.27,422.24 804.77,426.13 805.27,429.93 805.78,433.64 806.28,437.26 806.78,440.78 807.29,444.20 807.79,447.52 808.30,450.74 808.80,453.85 809.30,456.84 809.81,459.73 810.31,462.49 810.81,465.14 811.32,467.67 811.82,470.07 812.32,472.34 812.83,474.49 813.33,476.50 813.83,478.39 814.34,480.14 814.84,481.75 815.35,483.22 815.85,484.55 816.35,485.75 816.86,486.80 817.36,487.70 817.86,488.46 818.37,489.08 818.87,489.54 819.37,489.86 819.88,490.04 820.38,490.06 820.88,489.93 821.39,489.66 821.89,489.23 822.40,488.65 822.90,487.93 823.40,487.06 823.91,486.03 824.41,484.86 824.91,483.54 825.42,482.07 825.92,480.46 826.42,478.70 826.93,476.80 827.43,474.75 827.93,472.56 828.44,470.23 828.94,467.77 829.45,465.16 829.95,462.42 830.45,459.55 830.96,456.55 831.46,453.41 831.96,450.15 832.47,446.77 832.97,443.27 833.47,439.64 833.98,435.90 834.48,432.04 834.98,428.08 835.49,424.00 835.99,419.83 836.50,415.55 837.00,411.17 837.50,406.70 838.01,402.13 838.51,397.48 839.01,392.75 839.52,387.93 840.02,383.04 840.52,378.07 841.03,373.04 841.53,367.94 842.04,362.78 842.54,357.57 843.04,352.30 843.55,346.99 844.05,341.63 844.55,336.23 845.06,330.79 845.56,325.33 846.06,319.84 846.57,314.33 847.07,308.80 847.57,303.26 848.08,297.71 848.58,292.15 849.09,286.60 849.59,281.05 850.09,275.52 850.60,270.00 851.10,264.49 851.60,259.02 852.11,253.57 852.61,248.15 853.11,242.77 853.62,237.44 854.12,232.15 854.62,226.91 855.13,221.73 855.63,216.61 856.14,211.55 856.64,206.56 857.14,201.64 857.65,196.80 858.15,192.05 858.65,187.38 859.16,182.80 859.66,178.31 860.16,173.92 860.67,169.63 861.17,165.44 861.67,161.37 862.18,157.41 862.68,153.56 863.19,149.83 863.69,146.23 864.19,142.75 864.70,139.40 865.20,136.18 865.70,133.10 866.21,130.15 866.71,127.35 867.21,124.69 867.72,122.17 868.22,119.80 868.72,117.59 869.23,115.52 869.73,113.61 870.24,111.86 870.74,110.26 871.24,108.83 871.75,107.55 872.25,106.44 872.75,105.49 873.26,104.71 873.76,104.09 874.26,103.64 874.77,103.36 875.27,103.24 875.77,103.30 876.28,103.52 876.78,103.91 877.29,104.47 877.79,105.20 878.29,106.10 878.80,107.16 879.30,108.40 879.80,109.80 880.31,111.37 880.81,113.10 881.31,115.00 881.82,117.06 882.32,119.28 882.82,121.66 883.33,124.20 883.83,126.89 884.34,129.74 884.84,132.75 885.34,135.90 885.85,139.20 886.35,142.65 886.85,146.24 887.36,149.97 887.86,153.83 888.36,157.84 888.87,161.97 889.37,166.23 889.87,170.62 890.38,175.13 890.88,179.76 891.39,184.50 891.89,189.35 892.39,194.31 892.90,199.38 893.40,204.54 893.90,209.80 894.41,215.15 894.91,220.58 895.41,226.10 895.92,231.70 896.42,237.37 896.92,243.11 897.43,248.91 897.93,254.78 898.44,260.70 898.94,266.67 899.44,272.68 899.95,278.74 900.45,284.83 900.95,290.95 901.46,297.10 901.96,303.27 902.46,309.46 902.97,315.65 903.47,321.85 903.97,328.05 904.48,334.25 904.98,340.44 905.49,346.61 905.99,352.76 906.49,358.89 907.00,364.99 907.50,371.05 908.00,377.07 908.51,383.05 909.01,388.98 909.51,394.85 910.02,400.66 910.52,406.40 911.02,412.08 911.53,417.68 912.03,423.20 912.54,428.64 913.04,433.99 913.54,439.24 914.05,444.40 914.55,449.46 915.05,454.40 915.56,459.24 916.06,463.96 916.56,468.57 917.07,473.05 917.57,477.40 918.07,481.62 918.58,485.71 919.08,489.66 919.59,493.47 920.09,497.13 920.59,500.65 921.10,504.01 921.60,507.22 922.10,510.27 922.61,513.16 923.11,515.89 923.61,518.45 924.12,520.85 924.62,523.08 925.12,525.13 925.63,527.01 926.13,528.71 926.64,530.24 927.14,531.59 927.64,532.75 928.15,533.74 928.65,534.54 929.15,535.16 929.66,535.59 930.16,535.84 930.66,535.90 931.17,535.78 931.67,535.47 932.17,534.97 932.68,534.29 933.18,533.42 933.69,532.36 934.19,531.12 934.69,529.70 935.20,528.09 935.70,526.30 936.20,524.33 936.71,522.18 937.21,519.85 937.71,517.34 938.22,514.66 938.72,511.80 939.22,508.78 939.73,505.58 940.23,502.22 940.74,498.69 941.24,495.01 941.74,491.16 942.25,487.16 942.75,483.00 943.25,478.70 943.76,474.25 944.26,469.66 944.76,464.92 945.27,460.06 945.77,455.06 946.27,449.93 946.78,444.68 947.28,439.31 947.79,433.82 948.29,428.23 948.79,422.52 949.30,416.72 949.80,410.81 950.30,404.82 950.81,398.73 951.31,392.56 951.81,386.32 952.32,380.00 952.82,373.61 953.32,367.16 953.83,360.65 954.33,354.09 954.84,347.48 955.34,340.83 955.84,334.15 956.35,327.43 956.85,320.68 957.35,313.92 957.86,307.14 958.36,300.36 958.86,293.57 959.37,286.78 959.87,280.00 960.37,273.23 960.88,266.49 961.38,259.76 961.89,253.07 962.39,246.41 962.89,239.79 963.40,233.22 963.90,226.71 964.40,220.25 964.91,213.85 965.41,207.52 965.91,201.27 966.42,195.09 966.92,189.00 967.42,182.99 967.93,177.08 968.43,171.27 968.94,165.57 969.44,159.97 969.94,154.49 970.45,149.12 970.95,143.88 971.45,138.77 971.96,133.79 972.46,128.94 972.96,124.23 973.47,119.67 973.97,115.26 974.47,111.00 974.98,106.89 975.48,102.95 975.99,99.17 976.49,95.55 976.99,92.10 977.50,88.83 978.00,85.73" stroke="#d97706"/>
<polyline points="273.50,309.00 274.00,309.01 274.51,309.01 275.01,309.02 275.51,309.03 276.02,309.03 276.52,309.04 277.03,309.05 277.53,309.05 278.03,309.06 278.54,309.07 279.04,309.07 279.54,309.08 280.05,309.09 280.55,309.10 281.05,309.10 281.56,309.11 282.06,309.12 282.56,309.13 283.07,309.13 283.57,309.14 284.08,309.15 284.58,309.16 285.08,309.16 285.59,309.17 286.09,309.18 286.59,309.19 287.10,309.20 287.60,309.20 288.10,309.21 288.61,309.22 289.11,309.23 289.61,309.24 290.12,309.25 290.62,309.25 291.13,309.26 291.63,309.27 292.13,309.28 292.64,309.29 293.14,309.30 293.64,309.30 294.15,309.31 294.65,309.32 295.15,309.33 295.66,309.34 296.16,309.35 296.66,309.35 297.17,309.36 297.67,309.37 298.18,309.38 298.68,309.39 299.18,309.39 299.69,309.40 300.19,309.41 300.69,309.42 301.20,309.43 301.70,309.43 302.20,309.44 302.71,309.45 303.21,309.46 303.71,309.46 304.22,309.47 304.72,309.48 305.23,309.49 305.73,309.49 306.23,309.50 306.74,309.51 307.24,309.51 307.74,309.52 308.25,309.53 308.75,309.53 309.25,309.54 309.76,309.54 310.26,309.55 310.76,309.56 311.27,309.56 311.77,309.57 312.28,309.57 312.78,309.58 313.28,309.58 313.79,309.58 314.29,309.59 314.79,309.59 315.30,309.60 315.80,309.60 316.30,309.60 316.81,309.60 317.31,309.61 317.81,309.61 318.32,309.61 318.82,309.61 319.33,309.61 319.83,309.61 320.33,309.61 320.84,309.61 321.34,309.61 321.84,309.61 322.35,309.61 322.85,309.61 323.35,309.61 323.86,309.61 324.36,309.60 324.86,309.60 325.37,309.60 325.87,309.59 326.38,309.59 326.88,309.58 327.38,309.58 327.89,309.57 328.39,309.57 328.89,309.56 329.40,309.55 329.90,309.55 330.40,309.54 330.91,309.53 331.41,309.52 331.91,309.51 332.42,309.50 332.92,309.49 333.43,309.47 333.93,309.46 334.43,309.45 334.94,309.44 335.44,309.42 335.94,309.41 336.45,309.39 336.95,309.37 337.45,309.36 337.96,309.34 338.46,309.32 338.96,309.30 339.47,309.28 339.97,309.26 340.48,309.24 340.98,309.22 341.48,309.19 341.99,309.17 342.49,309.15 342.99,309.12 343.50,309.10 344.00,309.07 344.50,309.04 345.01,309.01 345.51,308.98 346.01,308.95 346.52,308.92 347.02,308.89 347.53,308.86 348.03,308.82 348.53,308.79 349.04,308.75 349.54,308.72 350.04,308.68 350.55,308.64 351.05,308.60 351.55,308.56 352.06,308.52 352.56,308.48 353.06,308.44 353.57,308.40 354.07,308.35 354.58,308.31 355.08,308.26 355.58,308.21 356.09,308.16 356.59,308.11 357.09,308.06 357.60,308.01 358.10,307.96 358.60,307.91 359.11,307.85 359.61,307.80 360.11,307.74 360.62,307.68 361.12,307.63 361.63,307.57 362.13,307.51 362.63,307.44 363.14,307.38 363.64,307.32 364.14,307.26 364.65,307.19 365.15,307.12 365.65,307.06 366.16,306.99 366.66,306.92 367.16,306.85 367.67,306.78 368.17,306.71 368.68,306.64 369.18,306.56 369.68,306.49 370.19,306.41 370.69,306.34 371.19,306.26 371.70,306.18 372.20,306.10 372.70,306.02 373.21,305.94 373.71,305.86 374.21,305.78 374.72,305.69 375.22,305.61 375.73,305.52 376.23,305.44 376.73,305.35 377.24,305.26 377.74,305.18 378.24,305.09 378.75,305.00 379.25,304.91 379.75,304.82 380.26,304.73 380.76,304.63 381.26,304.54 381.77,304.45 382.27,304.36 382.78,304.26 383.28,304.17 383.78,304.07 384.29,303.98 384.79,303.88 385.29,303.78 385.80,303.69 386.30,303.59 386.80,303.49 387.31,303.39 387.81,303.29 388.31,303.20 388.82,303.10 389.32,303.00 389.83,302.90 390.33,302.80 390.83,302.70 391.34,302.60 391.84,302.50 392.34,302.40 392.85,302.30 393.35,302.21 393.85,302.11 394.36,302.01 394.86,301.91 395.36,301.81 395.87,301.71 396.37,301.62 396.88,301.52 397.38,301.42 397.88,301.32 398.39,301.23 398.89,301.13 399.39,301.04 399.90,300.94 400.40,300.85 400.90,300.76 401.41,300.67 401.91,300.57 402.41,300.48 402.92,300.39 403.42,300.31 403.93,300.22 404.43,300.13 404.93,300.05 405.44,299.96 405.94,299.88 406.44,299.80 406.95,299.72 407.45,299.64 407.95,299.56 408.46,299.48 408.96,299.41 409.46,299.34 409.97,299.26 410.47,299.19 410.98,299.13 411.48,299.06 411.98,298.99 412.49,298.93 412.99,298.87 413.49,298.81 414.00,298.76 414.50,298.70 415.00,298.65 415.51,298.60 416.01,298.55 416.52,298.51 417.02,298.46 417.52,298.42 418.03,298.38 418.53,298.35 419.03,298.31 419.54,298.28 420.04,298.26 420.54,298.23 421.05,298.21 421.55,298.19 422.05,298.18 422.56,298.16 423.06,298.15 423.57,298.15 424.07,298.14 424.57,298.14 425.08,298.15 425.58,298.15 426.08,298.16 426.59,298.17 427.09,298.19 427.59,298.21 428.10,298.24 428.60,298.26 429.10,298.30 429.61,298.33 430.11,298.37 430.62,298.41 431.12,298.46 431.62,298.51 432.13,298.57 432.63,298.62 433.13,298.69 433.64,298.75 434.14,298.83 434.64,298.90 435.15,298.98 435.65,299.07 436.15,299.16 436.66,299.25 437.16,299.35 437.67,299.45 438.17,299.56 438.67,299.67 439.18,299.78 439.68,299.90 440.18,300.03 440.69,300.16 441.19,300.29 441.69,300.43 442.20,300.58 442.70,300.73 443.20,300.88 443.71,301.04 444.21,301.21 444.72,301.38 445.22,301.55 445.72,301.73 446.23,301.91 446.73,302.10 447.23,302.30 447.74,302.49 448.24,302.70 448.74,302.91 449.25,303.12 449.75,303.34 450.25,303.57 450.76,303.80 451.26,304.03 451.77,304.27 452.27,304.51 452.77,304.76 453.28,305.02 453.78,305.28 454.28,305.55 454.79,305.82 455.29,306.09 455.79,306.37 456.30,306.66 456.80,306.95 457.30,307.24 457.81,307.54 458.31,307.85 458.82,308.16 459.32,308.47 459.82,308.79 460.33,309.12 460.83,309.45 461.33,309.78 461.84,310.12 462.34,310.46 462.84,310.81 463.35,311.16 463.85,311.52 464.35,311.88 464.86,312.25 465.36,312.62 465.87,312.99 466.37,313.37 466.87,313.76 467.38,314.14 467.88,314.53 468.38,314.93 468.89,315.33 469.39,315.73 469.89,316.14 470.40,316.55 470.90,316.96 471.40,317.38 471.91,317.80 472.41,318.23 472.92,318.66 473.42,319.09 473.92,319.52 474.43,319.96 474.93,320.40 475.43,320.84 475.94,321.29 476.44,321.74 476.94,322.19 477.45,322.64 477.95,323.10 478.45,323.55 478.96,324.01 479.46,324.48 479.97,324.94 480.47,325.41 480.97,325.87 481.48,326.34 481.98,326.81 482.48,327.28 482.99,327.75 483.49,328.23 483.99,328.70 484.50,329.18 485.00,329.65 485.50,330.13 486.01,330.60 486.51,331.08 487.02,331.56 487.52,332.03 488.02,332.51 488.53,332.98 489.03,333.46 489.53,333.93 490.04,334.41 490.54,334.88 491.04,335.35 491.55,335.82 492.05,336.29 492.55,336.76 493.06,337.22 493.56,337.68 494.07,338.15 494.57,338.60 495.07,339.06 495.58,339.52 496.08,339.97 496.58,340.41 497.09,340.86 497.59,341.30 498.09,341.74 498.60,342.18 499.10,342.61 499.60,343.03 500.11,343.46 500.61,343.88 501.12,344.29 501.62,344.70 502.12,345.11 502.63,345.51 503.13,345.90 503.63,346.29 504.14,346.68 504.64,347.06 505.14,347.43 505.65,347.80 506.15,348.16 506.65,348.52 507.16,348.87 507.66,349.21 508.17,349.55 508.67,349.87 509.17,350.20 509.68,350.51 510.18,350.82 510.68,351.12 511.19,351.41 511.69,351.69 512.19,351.97 512.70,352.24 513.20,352.50 513.70,352.75 514.21,352.99 514.71,353.23 515.22,353.45 515.72,353.67 516.22,353.87 516.73,354.07 517.23,354.26 517.73,354.44 518.24,354.61 518.74,354.76 519.24,354.91 519.75,355.05 520.25,355.18 520.75,355.30 521.26,355.40 521.76,355.50 522.27,355.59 522.77,355.66 523.27,355.72 523.78,355.78 524.28,355.82 524.78,355.85 525.29,355.87 525.79,355.87 526.29,355.87 526.80,355.85 527.30,355.82 527.80,355.78 528.31,355.73 528.81,355.67 529.32,355.59 529.82,355.50 530.32,355.40 530.83,355.29 531.33,355.16 531.83,355.02 532.34,354.87 532.84,354.71 533.34,354.53 533.85,354.35 534.35,354.14 534.85,353.93 535.36,353.70 535.86,353.46 536.37,353.21 536.87,352.94 537.37,352.66 537.88,352.37 538.38,352.07 538.88,351.75 539.39,351.42 539.89,351.08 540.39,350.72 540.90,350.35 541.40,349.97 541.90,349.57 542.41,349.16 542.91,348.74 543.42,348.31 543.92,347.86 544.42,347.40 544.93,346.93 545.43,346.45 545.93,345.95 546.44,345.44 546.94,344.92 547.44,344.38 547.95,343.83 548.45,343.27 548.95,342.70 549.46,342.12 549.96,341.52 550.47,340.91 550.97,340.29 551.47,339.66 551.98,339.02 552.48,338.36 552.98,337.70 553.49,337.02 553.99,336.33 554.49,335.63 555.00,334.92 555.50,334.20 556.01,333.47 556.51,332.73 557.01,331.97 557.52,331.21 558.02,330.44 558.52,329.66 559.03,328.86 559.53,328.06 560.03,327.25 560.54,326.43 561.04,325.60 561.54,324.76 562.05,323.91 562.55,323.06 563.06,322.19 563.56,321.32 564.06,320.44 564.57,319.56 565.07,318.66 565.57,317.76 566.08,316.85 566.58,315.93 567.08,315.01 567.59,314.08 568.09,313.15 568.59,312.20 569.10,311.26 569.60,310.31 570.11,309.35 570.61,308.39 571.11,307.42 571.62,306.45 572.12,305.47 572.62,304.49 573.13,303.51 573.63,302.52 574.13,301.53 574.64,300.54 575.14,299.54 575.64,298.55 576.15,297.55 576.65,296.54 577.16,295.54 577.66,294.53 578.16,293.53 578.67,292.52 579.17,291.51 579.67,290.51 580.18,289.50 580.68,288.49 581.18,287.49 581.69,286.48 582.19,285.47 582.69,284.47 583.20,283.47 583.70,282.47 584.21,281.47 584.71,280.48 585.21,279.49 585.72,278.50 586.22,277.51 586.72,276.53 587.23,275.55 587.73,274.58 588.23,273.61 588.74,272.65 589.24,271.69 589.74,270.73 590.25,269.79 590.75,268.84 591.26,267.91 591.76,266.98 592.26,266.06 592.77,265.14 593.27,264.23 593.77,263.33 594.28,262.44 594.78,261.55 595.28,260.68 595.79,259.81 596.29,258.95 596.79,258.10 597.30,257.26 597.80,256.43 598.31,255.61 598.81,254.80 599.31,254.00 599.82,253.21 600.32,252.43 600.82,251.66 601.33,250.90 601.83,250.16 602.33,249.42 602.84,248.70 603.34,247.99 603.84,247.30 604.35,246.61 604.85,245.94 605.36,245.28 605.86,244.64 606.36,244.01 606.87,243.39 607.37,242.79 607.87,242.20 608.38,241.62 608.88,241.06 609.38,240.51 609.89,239.98 610.39,239.46 610.89,238.96 611.40,238.47 611.90,238.00 612.41,237.55 612.91,237.11 613.41,236.68 613.92,236.27 614.42,235.88 614.92,235.51 615.43,235.15 615.93,234.80 616.43,234.48 616.94,234.16 617.44,233.87 617.94,233.59 618.45,233.33 618.95,233.09 619.46,232.86 619.96,232.66 620.46,232.46 620.97,232.29 621.47,232.13 621.97,231.99 622.48,231.87 622.98,231.77 623.48,231.68 623.99,231.61 624.49,231.55 624.99,231.52 625.50,231.50 626.00,231.50 626.51,231.52 627.01,231.55 627.51,231.61 628.02,231.68 628.52,231.77 629.02,231.87 629.53,231.99 630.03,232.13 630.53,232.29 631.04,232.46 631.54,232.66 632.04,232.86 632.55,233.09 633.05,233.33 633.56,233.59 634.06,233.87 634.56,234.16 635.07,234.48 635.57,234.80 636.07,235.15 636.58,235.51 637.08,235.88 637.58,236.27 638.09,236.68 638.59,237.11 639.09,237.55 639.60,238.00 640.10,238.47 640.61,238.96 641.11,239.46 641.61,239.98 642.12,240.51 642.62,241.06 643.12,241.62 643.63,242.20 644.13,242.79 644.63,243.39 645.14,244.01 645.64,244.64 646.14,245.28 646.65,245.94 647.15,246.61 647.66,247.30 648.16,247.99 648.66,248.70 649.17,249.42 649.67,250.16 650.17,250.90 650.68,251.66 651.18,252.43 651.68,253.21 652.19,254.00 652.69,254.80 653.19,255.61 653.70,256.43 654.20,257.26 654.71,258.10 655.21,258.95 655.71,259.81 656.22,260.68 656.72,261.55 657.22,262.44 657.73,263.33 658.23,264.23 658.73,265.14 659.24,266.06 659.74,266.98 660.24,267.91 660.75,268.84 661.25,269.79 661.76,270.73 662.26,271.69 662.76,272.65 663.27,273.61 663.77,274.58 664.27,275.55 664.78,276.53 665.28,277.51 665.78,278.50 666.29,279.49 666.79,280.48 667.29,281.47 667.80,282.47 668.30,283.47 668.81,284.47 669.31,285.47 669.81,286.48 670.32,287.49 670.82,288.49 671.32,289.50 671.83,290.51 672.33,291.51 672.83,292.52 673.34,293.53 673.84,294.53 674.34,295.54 674.85,296.54 675.35,297.55 675.86,298.55 676.36,299.54 676.86,300.54 677.37,301.53 677.87,302.52 678.37,303.51 678.88,304.49 679.38,305.47 679.88,306.45 680.39,307.42 680.89,308.39 681.39,309.35 681.90,310.31 682.40,311.26 682.91,312.20 683.41,313.15 683.91,314.08 684.42,315.01 684.92,315.93 685.42,316.85 685.93,317.76 686.43,318.66 686.93,319.56 687.44,320.44 687.94,321.32 688.44,322.19 688.95,323.06 689.45,323.91 689.96,324.76 690.46,325.60 690.96,326.43 691.47,327.25 691.97,328.06 692.47,328.86 692.98,329.66 693.48,330.44 693.98,331.21 694.49,331.97 694.99,332.73 695.49,333.47 696.00,334.20 696.50,334.92 697.01,335.63 697.51,336.33 698.01,337.02 698.52,337.70 699.02,338.36 699.52,339.02 700.03,339.66 700.53,340.29 701.03,340.91 701.54,341.52 702.04,342.12 702.55,342.70 703.05,343.27 703.55,343.83 704.06,344.38 704.56,344.92 705.06,345.44 705.57,345.95 706.07,346.45 706.57,346.93 707.08,347.40 707.58,347.86 708.08,348.31 708.59,348.74 709.09,349.16 709.60,349.57 710.10,349.97 710.60,350.35 711.11,350.72 711.61,351.08 712.11,351.42 712.62,351.75 713.12,352.07 713.62,352.37 714.13,352.66 714.63,352.94 715.13,353.21 715.64,353.46 716.14,353.70 716.65,353.93 717.15,354.14 717.65,354.35 718.16,354.53 718.66,354.71 719.16,354.87 719.67,355.02 720.17,355.16 720.67,355.29 721.18,355.40 721.68,355.50 722.18,355.59 722.69,355.67 723.19,355.73 723.70,355.78 724.20,355.82 724.70,355.85 725.21,355.87 725.71,355.87 726.21,355.87 726.72,355.85 727.22,355.82 727.72,355.78 728.23,355.72 728.73,355.66 729.23,355.59 729.74,355.50 730.24,355.40 730.75,355.30 731.25,355.18 731.75,355.05 732.26,354.91 732.76,354.76 733.26,354.61 733.77,354.44 734.27,354.26 734.77,354.07 735.28,353.87 735.78,353.67 736.28,353.45 736.79,353.23 737.29,352.99 737.80,352.75 738.30,352.50 738.80,352.24 739.31,351.97 739.81,351.69 740.31,351.41 740.82,351.12 741.32,350.82 741.82,350.51 742.33,350.20 742.83,349.87 743.33,349.55 743.84,349.21 744.34,348.87 744.85,348.52 745.35,348.16 745.85,347.80 746.36,347.43 746.86,347.06 747.36,346.68 747.87,346.29 748.37,345.90 748.87,345.51 749.38,345.11 749.88,344.70 750.38,344.29 750.89,343.88 751.39,343.46 751.90,343.03 752.40,342.61 752.90,342.18 753.41,341.74 753.91,341.30 754.41,340.86 754.92,340.41 755.42,339.97 755.92,339.52 756.43,339.06 756.93,338.60 757.43,338.15 757.94,337.68 758.44,337.22 758.95,336.76 759.45,336.29 759.95,335.82 760.46,335.35 760.96,334.88 761.46,334.41 761.97,333.93 762.47,333.46 762.97,332.98 763.48,332.51 763.98,332.03 764.48,331.56 764.99,331.08 765.49,330.60 766.00,330.13 766.50,329.65 767.00,329.18 767.51,328.70 768.01,328.23 768.51,327.75 769.02,327.28 769.52,326.81 770.02,326.34 770.53,325.87 771.03,325.41 771.53,324.94 772.04,324.48 772.54,324.01 773.05,323.55 773.55,323.10 774.05,322.64 774.56,322.19 775.06,321.74 775.56,321.29 776.07,320.84 776.57,320.40 777.07,319.96 777.58,319.52 778.08,319.09 778.58,318.66 779.09,318.23 779.59,317.80 780.10,317.38 780.60,316.96 781.10,316.55 781.61,316.14 782.11,315.73 782.61,315.33 783.12,314.93 783.62,314.53 784.12,314.14 784.63,313.76 785.13,313.37 785.63,312.99 786.14,312.62 786.64,312.25 787.15,311.88 787.65,311.52 788.15,311.16 788.66,310.81 789.16,310.46 789.66,310.12 790.17,309.78 790.67,309.45 791.17,309.12 791.68,308.79 792.18,308.47 792.68,308.16 793.19,307.85 793.69,307.54 794.20,307.24 794.70,306.95 795.20,306.66 795.71,306.37 796.21,306.09 796.71,305.82 797.22,305.55 797.72,305.28 798.22,305.02 798.73,304.76 799.23,304.51 799.73,304.27 800.24,304.03 800.74,303.80 801.25,303.57 801.75,303.34 802.25,303.12 802.76,302.91 803.26,302.70 803.76,302.49 804.27,302.30 804.77,302.10 805.27,301.91 805.78,301.73 806.28,301.55 806.78,301.38 807.29,301.21 807.79,301.04 808.30,300.88 808.80,300.73 809.30,300.58 809.81,300.43 810.31,300.29 810.81,300.16 811.32,300.03 811.82,299.90 812.32,299.78 812.83,299.67 813.33,299.56 813.83,299.45 814.34,299.35 814.84,299.25 815.35,299.16 815.85,299.07 816.35,298.98 816.86,298.90 817.36,298.83 817.86,298.75 818.37,298.69 818.87,298.62 819.37,298.57 819.88,298.51 820.38,298.46 820.88,298.41 821.39,298.37 821.89,298.33 822.40,298.30 822.90,298.26 823.40,298.24 823.91,298.21 824.41,298.19 824.91,298.17 825.42,298.16 825.92,298.15 826.42,298.15 826.93,298.14 827.43,298.14 827.93,298.15 828.44,298.15 828.94,298.16 829.45,298.18 829.95,298.19 830.45,298.21 830.96,298.23 831.46,298.26 831.96,298.28 832.47,298.31 832.97,298.35 833.47,298.38 833.98,298.42 834.48,298.46 834.98,298.51 835.49,298.55 835.99,298.60 836.50,298.65 837.00,298.70 837.50,298.76 838.01,298.81 838.51,298.87 839.01,298.93 839.52,298.99 840.02,299.06 840.52,299.13 841.03,299.19 841.53,299.26 842.04,299.34 842.54,299.41 843.04,299.48 843.55,299.56 844.05,299.64 844.55,299.72 845.06,299.80 845.56,299.88 846.06,299.96 846.57,300.05 847.07,300.13 847.57,300.22 848.08,300.31 848.58,300.39 849.09,300.48 849.59,300.57 850.09,300.67 850.60,300.76 851.10,300.85 851.60,300.94 852.11,301.04 852.61,301.13 853.11,301.23 853.62,301.32 854.12,301.42 854.62,301.52 855.13,301.62 855.63,301.71 856.14,301.81 856.64,301.91 857.14,302.01 857.65,302.11 858.15,302.21 858.65,302.30 859.16,302.40 859.66,302.50 860.16,302.60 860.67,302.70 861.17,302.80 861.67,302.90 862.18,303.00 862.68,303.10 863.19,303.20 863.69,303.29 864.19,303.39 864.70,303.49 865.20,303.59 865.70,303.69 866.21,303.78 866.71,303.88 867.21,303.98 867.72,304.07 868.22,304.17 868.72,304.26 869.23,304.36 869.73,304.45 870.24,304.54 870.74,304.63 871.24,304.73 871.75,304.82 872.25,304.91 872.75,305.00 873.26,305.09 873.76,305.18 874.26,305.26 874.77,305.35 875.27,305.44 875.77,305.52 876.28,305.61 876.78,305.69 877.29,305.78 877.79,305.86 878.29,305.94 878.80,306.02 879.30,306.10 879.80,306.18 880.31,306.26 880.81,306.34 881.31,306.41 881.82,306.49 882.32,306.56 882.82,306.64 883.33,306.71 883.83,306.78 884.34,306.85 884.84,306.92 885.34,306.99 885.85,307.06 886.35,307.12 886.85,307.19 887.36,307.26 887.86,307.32 888.36,307.38 888.87,307.44 889.37,307.51 889.87,307.57 890.38,307.63 890.88,307.68 891.39,307.74 891.89,307.80 892.39,307.85 892.90,307.91 893.40,307.96 893.90,308.01 894.41,308.06 894.91,308.11 895.41,308.16 895.92,308.21 896.42,308.26 896.92,308.31 897.43,308.35 897.93,308.40 898.44,308.44 898.94,308.48 899.44,308.52 899.95,308.56 900.45,308.60 900.95,308.64 901.46,308.68 901.96,308.72 902.46,308.75 902.97,308.79 903.47,308.82 903.97,308.86 904.48,308.89 904.98,308.92 905.49,308.95 905.99,308.98 906.49,309.01 907.00,309.04 907.50,309.07 908.00,309.10 908.51,309.12 909.01,309.15 909.51,309.17 910.02,309.19 910.52,309.22 911.02,309.24 911.53,309.26 912.03,309.28 912.54,309.30 913.04,309.32 913.54,309.34 914.05,309.36 914.55,309.37 915.05,309.39 915.56,309.41 916.06,309.42 916.56,309.44 917.07,309.45 917.57,309.46 918.07,309.47 918.58,309.49 919.08,309.50 919.59,309.51 920.09,309.52 920.59,309.53 921.10,309.54 921.60,309.55 922.10,309.55 922.61,309.56 923.11,309.57 923.61,309.57 924.12,309.58 924.62,309.58 925.12,309.59 925.63,309.59 926.13,309.60 926.64,309.60 927.14,309.60 927.64,309.61 928.15,309.61 928.65,309.61 929.15,309.61 929.66,309.61 930.16,309.61 930.66,309.61 931.17,309.61 931.67,309.61 932.17,309.61 932.68,309.61 933.18,309.61 933.69,309.61 934.19,309.61 934.69,309.60 935.20,309.60 935.70,309.60 936.20,309.60 936.71,309.59 937.21,309.59 937.71,309.58 938.22,309.58 938.72,309.58 939.22,309.57 939.73,309.57 940.23,309.56 940.74,309.56 941.24,309.55 941.74,309.54 942.25,309.54 942.75,309.53 943.25,309.53 943.76,309.52 944.26,309.51 944.76,309.51 945.27,309.50 945.77,309.49 946.27,309.49 946.78,309.48 947.28,309.47 947.79,309.46 948.29,309.46 948.79,309.45 949.30,309.44 949.80,309.43 950.30,309.43 950.81,309.42 951.31,309.41 951.81,309.40 952.32,309.39 952.82,309.39 953.32,309.38 953.83,309.37 954.33,309.36 954.84,309.35 955.34,309.35 955.84,309.34 956.35,309.33 956.85,309.32 957.35,309.31 957.86,309.30 958.36,309.30 958.86,309.29 959.37,309.28 959.87,309.27 960.37,309.26 960.88,309.25 961.38,309.25 961.89,309.24 962.39,309.23 962.89,309.22 963.40,309.21 963.90,309.20 964.40,309.20 964.91,309.19 965.41,309.18 965.91,309.17 966.42,309.16 966.92,309.16 967.42,309.15 967.93,309.14 968.43,309.13 968.94,309.13 969.44,309.12 969.94,309.11 970.45,309.10 970.95,309.10 971.45,309.09 971.96,309.08 972.46,309.07 972.96,309.07 973.47,309.06 973.97,309.05 974.47,309.05 974.98,309.04 975.48,309.03 975.99,309.03 976.49,309.02 976.99,309.01 977.50,309.01 978.00,309.00" stroke="#7c3aed"/>
</g>
<text x="343.95" y="320.8" font-size="9" fill="#222222" stroke="#222222" stroke-width="0.15" text-anchor="middle">-8</text>
<text x="414.40" y="320.8" font-size="9" fill="#222222" stroke="#222222" stroke-width="0.15" text-anchor="middle">-6</text>
<text x="484.85" y="320.8" font-size="9" fill="#222222" stroke="#222222" stroke-width="0.15" text-anchor="middle">-4</text>
<text x="555.30" y="320.8" font-size="9" fill="#222222" stroke="#222222" stroke-width="0.15" text-anchor="middle">-2</text>
<text x="625.75" y="320.8" font-size="9" fill="#222222" stroke="#222222" stroke-width="0.15" text-anchor="middle">0</text>
<text x="696.20" y="320.8" font-size="9" fill="#222222" stroke="#222222" stroke-width="0.15" text-anchor="middle">2</text>
<text x="766.65" y="320.8" font-size="9" fill="#222222" stroke="#222222" stroke-width="0.15" text-anchor="middle">4</text>
<text x="837.10" y="320.8" font-size="9" fill="#222222" stroke="#222222" stroke-width="0.15" text-anchor="middle">6</text>
<text x="907.55" y="320.8" font-size="9" fill="#222222" stroke="#222222" stroke-width="0.15" text-anchor="middle">8</text>
<text x="978.00" y="320.8" font-size="9" fill="#222222" stroke="#222222" stroke-width="0.15" text-anchor="middle">10</text>
<text x="299.3" y="543.40" font-size="9" fill="#222222" stroke="#222222" stroke-width="0.15" text-anchor="end">-3</text>
<text x="299.3" y="466.15" font-size="9" fill="#222222" stroke="#222222" stroke-width="0.15" text-anchor="end">-2</text>
<text x="299.3" y="388.90" font-size="9" fill="#222222" stroke="#222222" stroke-width="0.15" text-anchor="end">-1</text>
<text x="299.3" y="311.65" font-size="9" fill="#222222" stroke="#222222" stroke-width="0.15" text-anchor="end">0</text>
<text x="299.3" y="234.40" font-size="9" fill="#222222" stroke="#222222" stroke-width="0.15" text-anchor="end">1</text>
<text x="299.3" y="157.15" font-size="9" fill="#222222" stroke="#222222" stroke-width="0.15" text-anchor="end">2</text>
<text x="299.3" y="79.90" font-size="9" fill="#222222" stroke="#222222" stroke-width="0.15" text-anchor="end">3</text>
<circle cx="524.62" cy="403.84" r="3.3" fill="#d1475e"/>
<circle cx="524.62" cy="329.41" r="3.3" fill="#2563eb"/>
<circle cx="524.62" cy="241.11" r="3.3" fill="#11946a"/>
<circle cx="524.62" cy="241.30" r="3.3" fill="#d97706"/>
<circle cx="524.62" cy="355.84" r="3.3" fill="#7c3aed"/>
<rect x="789" y="53" width="181.5" height="65" rx="5.5" fill="#ffffff" fill-opacity="0.93" stroke="#7a7a7a" stroke-width="1"/>
<rect x="795" y="60.00" width="8" height="8" rx="1" fill="#d1475e"/>
<text transform="translate(807.60,67.10) scale(0.88,1)" x="0" y="0" font-size="8.9" fill="#222222" text-anchor="start" font-weight="normal" textLength="57.05" lengthAdjust="spacing" stroke="#222222" stroke-width="0.06">sin(x)+cos(x)</text>
<rect x="795" y="70.85" width="8" height="8" rx="1" fill="#2563eb"/>
<text transform="translate(807.60,77.85) scale(0.88,1)" x="0" y="0" font-size="8.9" fill="#222222" text-anchor="start" font-weight="normal" textLength="24.55" lengthAdjust="spacing" stroke="#222222" stroke-width="0.06">sin(x)</text>
<rect x="795" y="81.70" width="8" height="8" rx="1" fill="#11946a"/>
<text transform="translate(807.60,88.60) scale(0.88,1)" x="0" y="0" font-size="8.9" fill="#222222" text-anchor="start" font-weight="normal" textLength="177.27" lengthAdjust="spacing" stroke="#222222" stroke-width="0.06">exp(-x<tspan font-size="10.23" baseline-shift="-1.3">*</tspan><tspan font-size="10.23" baseline-shift="-1.3">*</tspan>2 / 12) <tspan font-size="10.23" baseline-shift="-1.3">*</tspan> (sin(4<tspan font-size="10.23" baseline-shift="-1.3">*</tspan>x) + cos(2<tspan font-size="10.23" baseline-shift="-1.3">*</tspan>x))</text>
<rect x="795" y="92.55" width="8" height="8" rx="1" fill="#d97706"/>
<text transform="translate(807.60,99.35) scale(0.88,1)" x="0" y="0" font-size="8.9" fill="#222222" text-anchor="start" font-weight="normal" textLength="103.41" lengthAdjust="spacing" stroke="#222222" stroke-width="0.06">sqrt(fabs(x)) <tspan font-size="10.23" baseline-shift="-1.3">*</tspan> sin(2<tspan font-size="10.23" baseline-shift="-1.3">*</tspan>x)</text>
<rect x="795" y="103.40" width="8" height="8" rx="1" fill="#7c3aed"/>
<text transform="translate(807.60,110.10) scale(0.88,1)" x="0" y="0" font-size="8.9" fill="#222222" text-anchor="start" font-weight="normal" textLength="109.09" lengthAdjust="spacing" stroke="#222222" stroke-width="0.06">cos(x) <tspan font-size="10.23" baseline-shift="-1.3">*</tspan> exp(-x<tspan font-size="10.23" baseline-shift="-1.3">*</tspan><tspan font-size="10.23" baseline-shift="-1.3">*</tspan>2 / 18)</text>
<rect x="534" y="460" width="223" height="76.5" rx="5.5" fill="#ffffff" fill-opacity="0.93" stroke="#7a7a7a" stroke-width="1"/>
<text transform="translate(551.60,474.60) scale(0.88,1)" x="0" y="0" font-size="8.9" fill="#222222" text-anchor="start" font-weight="normal" textLength="56.14" lengthAdjust="spacing" stroke="#222222" stroke-width="0.06">x = -2.87091</text>
<text transform="translate(551.60,485.40) scale(0.88,1)" x="0" y="0" font-size="8.9" fill="#222222" text-anchor="start" font-weight="normal" textLength="110.57" lengthAdjust="spacing" stroke="#222222" stroke-width="0.06">sin(x)+cos(x) = -1.23098</text>
<circle cx="543.7" cy="486.20" r="3" fill="#d1475e"/>
<text transform="translate(551.60,496.20) scale(0.88,1)" x="0" y="0" font-size="8.9" fill="#222222" text-anchor="start" font-weight="normal" textLength="82.16" lengthAdjust="spacing" stroke="#222222" stroke-width="0.06">sin(x) = -0.267394</text>
<circle cx="543.7" cy="497.00" r="3" fill="#2563eb"/>
<text transform="translate(551.60,507.00) scale(0.88,1)" x="0" y="0" font-size="8.9" fill="#222222" text-anchor="start" font-weight="normal" textLength="225.68" lengthAdjust="spacing" stroke="#222222" stroke-width="0.06">exp(-x<tspan font-size="10.23" baseline-shift="-1.3">*</tspan><tspan font-size="10.23" baseline-shift="-1.3">*</tspan>2 / 12) <tspan font-size="10.23" baseline-shift="-1.3">*</tspan> (sin(4<tspan font-size="10.23" baseline-shift="-1.3">*</tspan>x) + cos(2<tspan font-size="10.23" baseline-shift="-1.3">*</tspan>x)) = 0.87563</text>
<circle cx="543.7" cy="507.80" r="3" fill="#11946a"/>
<text transform="translate(551.60,517.80) scale(0.88,1)" x="0" y="0" font-size="8.9" fill="#222222" text-anchor="start" font-weight="normal" textLength="158.30" lengthAdjust="spacing" stroke="#222222" stroke-width="0.06">sqrt(fabs(x)) <tspan font-size="10.23" baseline-shift="-1.3">*</tspan> sin(2<tspan font-size="10.23" baseline-shift="-1.3">*</tspan>x) = 0.873135</text>
<circle cx="543.7" cy="518.60" r="3" fill="#d97706"/>
<text transform="translate(551.60,528.60) scale(0.88,1)" x="0" y="0" font-size="8.9" fill="#222222" text-anchor="start" font-weight="normal" textLength="167.39" lengthAdjust="spacing" stroke="#222222" stroke-width="0.06">cos(x) <tspan font-size="10.23" baseline-shift="-1.3">*</tspan> exp(-x<tspan font-size="10.23" baseline-shift="-1.3">*</tspan><tspan font-size="10.23" baseline-shift="-1.3">*</tspan>2 / 18) = -0.609579</text>
<circle cx="543.7" cy="529.40" r="3" fill="#7c3aed"/>
</svg>
</body></html>
